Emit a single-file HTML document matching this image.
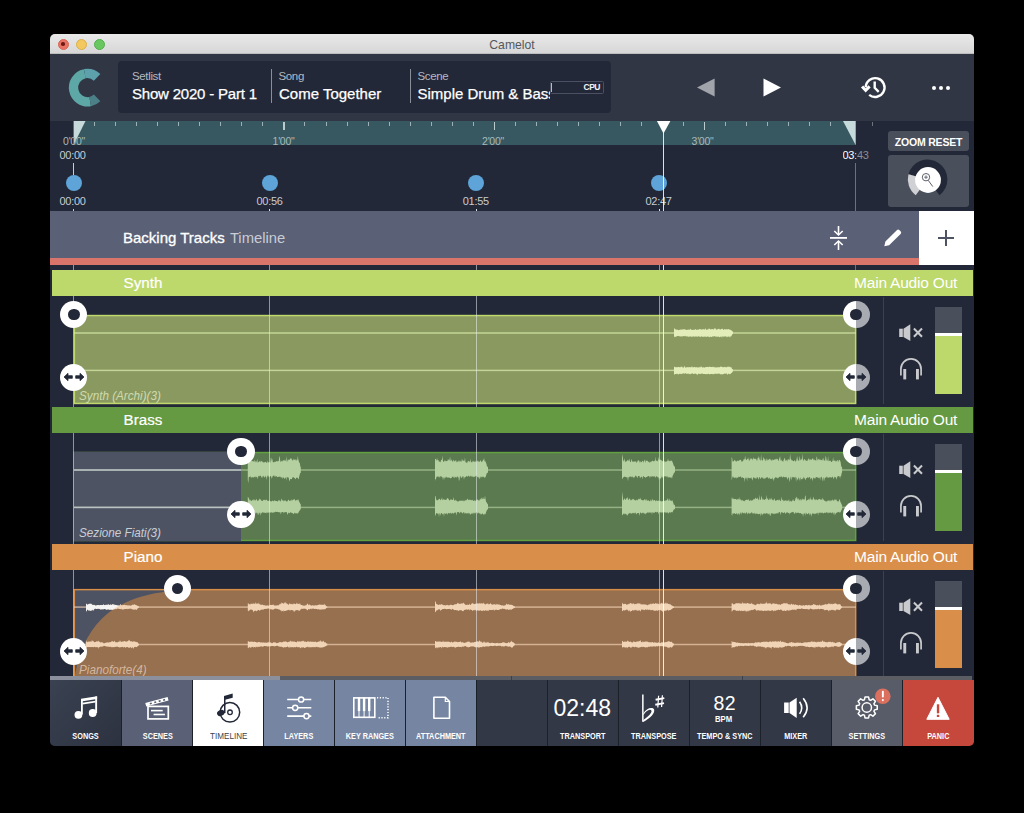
<!DOCTYPE html>
<html><head><meta charset="utf-8">
<style>
*{margin:0;padding:0;box-sizing:border-box}
html,body{width:1024px;height:813px;background:#000;overflow:hidden;font-family:"Liberation Sans",sans-serif}
div,span,svg{position:absolute}
.t{white-space:nowrap;line-height:1}
.tl{width:11px;height:11px;border-radius:50%;top:38.5px}
.lbl{font-size:11.5px;color:#b5b9c2;letter-spacing:-0.35px}
.val{font-size:15px;color:#fff;-webkit-text-stroke:0.25px #fff}
.tick{width:1px;background:rgba(255,255,255,0.75);top:122px;height:4px}
.rl{font-size:10.5px;color:#a9b8b9;top:136px;letter-spacing:-0.3px}
.tm{font-size:11px;color:#c9ccd3;letter-spacing:-0.3px}
.mk{width:16px;height:16px;border-radius:50%;background:#5ea4d8;top:175px}
.mt{width:1px;background:#c9ccd3;top:209px;height:2px}
</style></head><body>
<!-- window -->
<div style="left:50px;top:34px;width:924px;height:712px;background:#222837;border-radius:5px"></div>
<div style="left:50px;top:34px;width:924px;height:20px;background:linear-gradient(#e9e9e9,#d7d7d7);border-radius:5px 5px 0 0;border-bottom:1px solid #bdbdbd"></div>
<div class="t" style="left:50px;width:924px;top:39px;text-align:center;font-size:12.2px;color:#55575c">Camelot</div>
<div class="tl" style="left:57.7px;background:#ea7263;border:0.5px solid #d3675a"></div>
<div style="left:61.4px;top:42.2px;width:3.6px;height:3.6px;border-radius:50%;background:#6b1a14"></div>
<div class="tl" style="left:75.8px;background:#f3c85f;border:0.5px solid #dcae4c"></div>
<div class="tl" style="left:93.9px;background:#69c760;border:0.5px solid #56ae4c"></div>

<!-- header -->
<div style="left:50px;top:54px;width:924px;height:67px;background:#303644"></div>
<svg style="left:66px;top:66px" width="44" height="44" viewBox="0 0 44 44">
  <g transform="translate(21.2,21.7)" fill="none" stroke-width="9.3">
    <path d="M 9.90 -10.25 A 14.25 14.25 0 0 0 -2.47 -14.03" stroke="#5ca1ab"/>
    <path d="M -2.47 -14.03 A 14.25 14.25 0 0 0 2.96 13.94" stroke="#5ea7a7"/>
    <path d="M 2.96 13.94 A 14.25 14.25 0 0 0 9.90 10.25" stroke="#4b8088"/>
  </g>
</svg>
<div style="left:117.6px;top:61.4px;width:493px;height:51.6px;background:#222838;border-radius:4px"></div>
<div class="t lbl" style="left:132px;top:71px">Setlist</div>
<div class="t val" style="left:132px;top:85.5px;letter-spacing:-0.2px">Show 2020 - Part 1</div>
<div style="left:271.3px;top:68.6px;width:1px;height:34px;background:#8a8e98"></div>
<div class="t lbl" style="left:278.5px;top:71px">Song</div>
<div class="t val" style="left:279px;top:85.5px">Come Together</div>
<div style="left:410.1px;top:68.6px;width:1px;height:34px;background:#8a8e98"></div>
<div class="t lbl" style="left:417.5px;top:71px">Scene</div>
<div style="left:417px;top:80px;width:133.4px;height:24px;overflow:hidden"><div class="t val" style="left:0.5px;top:5.5px">Simple Drum &amp; Bass</div></div>
<div style="left:550.4px;top:81.2px;width:53.2px;height:12.5px;border:1px solid #4b5162;border-radius:1.5px"></div>
<div style="left:551.3px;top:82.6px;width:1px;height:9.6px;background:#b8bbc2"></div>
<div class="t" style="left:583.5px;top:83px;font-size:8.5px;font-weight:bold;color:#f2f2f2;letter-spacing:-0.5px">CPU</div>
<!-- transport icons -->
<svg style="left:690px;top:70px" width="100" height="36" viewBox="0 0 100 36">
  <path d="M 24.6 8.5 L 24.6 26.6 L 7 17.5 Z" fill="#a1a4ab"/>
  <path d="M 73.5 8.5 L 73.5 26.6 L 91 17.5 Z" fill="#fff"/>
</svg>
<svg style="left:855px;top:72px" width="40" height="32" viewBox="0 0 40 32">
  <path d="M10.74,15.2 A9.4,9.4 0 1 1 14.18,22.81" fill="none" stroke="#fff" stroke-width="2.4"/>
  <path d="M7.1,14.4 L10.7,18.4 L14.6,14.4" fill="none" stroke="#fff" stroke-width="3"/>
  <path d="M19.7,9.6 L19.7,15.8 L23.7,19.8" fill="none" stroke="#fff" stroke-width="2.4"/>
</svg>
<div style="left:931.5px;top:85.8px;width:4px;height:4px;border-radius:50%;background:#fff"></div>
<div style="left:938.5px;top:85.8px;width:4px;height:4px;border-radius:50%;background:#fff"></div>
<div style="left:945.5px;top:85.8px;width:4px;height:4px;border-radius:50%;background:#fff"></div>

<!-- ruler -->
<div style="left:73.6px;top:121px;width:782px;height:24px;background:#375860"></div>
<div style="left:94.1px;top:122px;width:1px;height:3.8px;background:rgba(225,235,240,0.6)"></div>
<div style="left:115.2px;top:122px;width:1px;height:3.8px;background:rgba(225,235,240,0.6)"></div>
<div style="left:136.2px;top:122px;width:1px;height:3.8px;background:rgba(225,235,240,0.6)"></div>
<div style="left:157.2px;top:122px;width:1px;height:3.8px;background:rgba(225,235,240,0.6)"></div>
<div style="left:178.2px;top:122px;width:1px;height:3.8px;background:rgba(225,235,240,0.6)"></div>
<div style="left:199.3px;top:122px;width:1px;height:3.8px;background:rgba(225,235,240,0.6)"></div>
<div style="left:220.3px;top:122px;width:1px;height:3.8px;background:rgba(225,235,240,0.6)"></div>
<div style="left:241.3px;top:122px;width:1px;height:3.8px;background:rgba(225,235,240,0.6)"></div>
<div style="left:262.4px;top:122px;width:1px;height:3.8px;background:rgba(225,235,240,0.6)"></div>
<div style="left:283.4px;top:122px;width:1.2px;height:7.5px;background:rgba(235,240,242,0.75)"></div>
<div style="left:304.4px;top:122px;width:1px;height:3.8px;background:rgba(225,235,240,0.6)"></div>
<div style="left:325.5px;top:122px;width:1px;height:3.8px;background:rgba(225,235,240,0.6)"></div>
<div style="left:346.5px;top:122px;width:1px;height:3.8px;background:rgba(225,235,240,0.6)"></div>
<div style="left:367.5px;top:122px;width:1px;height:3.8px;background:rgba(225,235,240,0.6)"></div>
<div style="left:388.6px;top:122px;width:1px;height:3.8px;background:rgba(225,235,240,0.6)"></div>
<div style="left:409.6px;top:122px;width:1px;height:3.8px;background:rgba(225,235,240,0.6)"></div>
<div style="left:430.6px;top:122px;width:1px;height:3.8px;background:rgba(225,235,240,0.6)"></div>
<div style="left:451.6px;top:122px;width:1px;height:3.8px;background:rgba(225,235,240,0.6)"></div>
<div style="left:472.7px;top:122px;width:1px;height:3.8px;background:rgba(225,235,240,0.6)"></div>
<div style="left:493.7px;top:122px;width:1.2px;height:7.5px;background:rgba(235,240,242,0.75)"></div>
<div style="left:514.7px;top:122px;width:1px;height:3.8px;background:rgba(225,235,240,0.6)"></div>
<div style="left:535.8px;top:122px;width:1px;height:3.8px;background:rgba(225,235,240,0.6)"></div>
<div style="left:556.8px;top:122px;width:1px;height:3.8px;background:rgba(225,235,240,0.6)"></div>
<div style="left:577.8px;top:122px;width:1px;height:3.8px;background:rgba(225,235,240,0.6)"></div>
<div style="left:598.9px;top:122px;width:1px;height:3.8px;background:rgba(225,235,240,0.6)"></div>
<div style="left:619.9px;top:122px;width:1px;height:3.8px;background:rgba(225,235,240,0.6)"></div>
<div style="left:640.9px;top:122px;width:1px;height:3.8px;background:rgba(225,235,240,0.6)"></div>
<div style="left:661.9px;top:122px;width:1px;height:3.8px;background:rgba(225,235,240,0.6)"></div>
<div style="left:683.0px;top:122px;width:1px;height:3.8px;background:rgba(225,235,240,0.6)"></div>
<div style="left:704.0px;top:122px;width:1.2px;height:7.5px;background:rgba(235,240,242,0.75)"></div>
<div style="left:725.0px;top:122px;width:1px;height:3.8px;background:rgba(225,235,240,0.6)"></div>
<div style="left:746.1px;top:122px;width:1px;height:3.8px;background:rgba(225,235,240,0.6)"></div>
<div style="left:767.1px;top:122px;width:1px;height:3.8px;background:rgba(225,235,240,0.6)"></div>
<div style="left:788.1px;top:122px;width:1px;height:3.8px;background:rgba(225,235,240,0.6)"></div>
<div style="left:809.2px;top:122px;width:1px;height:3.8px;background:rgba(225,235,240,0.6)"></div>
<div style="left:830.2px;top:122px;width:1px;height:3.8px;background:rgba(225,235,240,0.6)"></div>
<div style="left:872.2px;top:122px;width:1px;height:3.8px;background:rgba(255,255,255,0.35)"></div>
<svg style="left:0;top:0" width="1024" height="150">
  <polygon points="73.6,121 85.5,121 73.6,145" fill="#c6dadb"/>
  <polygon points="843,121 855.6,121 855.6,145" fill="#c6dadb"/>
</svg>
<div class="t rl" style="left:49px;width:50px;text-align:center">0'00"</div>
<div class="t rl" style="left:258.5px;width:50px;text-align:center">1'00"</div>
<div class="t rl" style="left:468px;width:50px;text-align:center">2'00"</div>
<div class="t rl" style="left:677.5px;width:50px;text-align:center">3'00"</div>
<div class="t tm" style="left:59.5px;top:150px">00:00</div>
<div style="left:842.5px;top:150px;width:13.3px;height:12px;overflow:hidden"><div class="t tm" style="left:0;top:0;color:#fff">03:43</div></div>
<div style="left:855.8px;top:150px;width:14px;height:12px;overflow:hidden"><div class="t tm" style="left:-13.3px;top:0;color:#8a8e98">03:43</div></div>
<div style="left:73.1px;top:163px;width:1.2px;height:12px;background:#c9ccd3"></div>
<div style="left:855.2px;top:163px;width:1.2px;height:102px;background:#6d717c"></div>
<div class="mk" style="left:65.6px"></div>
<div class="mk" style="left:261.8px"></div>
<div class="mk" style="left:468.4px"></div>
<div class="mk" style="left:651px"></div>
<div class="t tm" style="left:59.5px;top:196px">00:00</div>
<div class="t tm" style="left:256.5px;top:196px">00:56</div>
<div class="t tm" style="left:462.8px;top:196px">01:55</div>
<div class="t tm" style="left:645.5px;top:196px">02:47</div>
<div class="mt" style="left:73.1px"></div>
<div class="mt" style="left:269.3px"></div>
<div class="mt" style="left:475.9px"></div>
<div class="mt" style="left:658.5px"></div>

<!-- zoom reset -->
<div style="left:888px;top:131px;width:81px;height:19.6px;background:#4a4f5c;border-radius:3px"></div>
<div class="t" style="left:888px;width:81px;text-align:center;top:136.5px;font-size:10.5px;font-weight:bold;color:#fff;letter-spacing:-0.2px">ZOOM RESET</div>
<div style="left:888px;top:154.5px;width:81px;height:52px;background:#4a4f5c;border-radius:3px"></div>

<svg style="left:0;top:0" width="1024" height="813" viewBox="0 0 1024 813">
<defs><clipPath id="fade"><path d="M74.5,676 C84,625 112,595 178,590 L74.5,590 Z"/></clipPath></defs>
<rect x="74.35" y="315.55" width="781.3" height="87.90" fill="#8a9960" stroke="#c0d96d" stroke-width="1.5"/>
<rect x="74" y="332.25" width="782" height="1.5" fill="rgba(215,232,170,0.75)"/>
<rect x="74" y="369.65" width="782" height="1.5" fill="rgba(215,232,170,0.75)"/>
<path d="M674.0,328.3 L674.5,328.3 L675.0,329.5 L675.5,329.2 L676.0,329.4 L676.5,329.8 L677.0,329.4 L677.5,329.7 L678.0,330.0 L678.5,330.2 L679.0,329.9 L679.5,330.1 L680.0,329.6 L680.5,329.6 L681.0,330.0 L681.5,329.6 L682.0,329.3 L682.5,329.5 L683.0,329.6 L683.5,329.3 L684.0,329.2 L684.5,329.3 L685.0,329.5 L685.5,329.5 L686.0,329.8 L686.5,329.9 L687.0,329.9 L687.5,329.4 L688.0,330.0 L688.5,329.2 L689.0,329.9 L689.5,329.4 L690.0,329.5 L690.5,328.4 L691.0,329.8 L691.5,329.8 L692.0,329.7 L692.5,329.9 L693.0,329.7 L693.5,330.0 L694.0,329.6 L694.5,329.7 L695.0,329.8 L695.5,328.9 L696.0,329.3 L696.5,330.0 L697.0,329.9 L697.5,329.6 L698.0,329.4 L698.5,330.1 L699.0,329.1 L699.5,329.3 L700.0,329.0 L700.5,329.2 L701.0,329.5 L701.5,329.6 L702.0,329.5 L702.5,329.4 L703.0,329.1 L703.5,328.9 L704.0,329.8 L704.5,329.3 L705.0,329.4 L705.5,327.9 L706.0,329.4 L706.5,329.9 L707.0,329.6 L707.5,329.7 L708.0,328.9 L708.5,329.6 L709.0,327.9 L709.5,328.9 L710.0,329.1 L710.5,329.5 L711.0,329.3 L711.5,329.0 L712.0,329.6 L712.5,329.0 L713.0,329.1 L713.5,329.8 L714.0,329.1 L714.5,327.9 L715.0,329.1 L715.5,328.1 L716.0,329.4 L716.5,329.7 L717.0,329.6 L717.5,329.3 L718.0,328.9 L718.5,329.1 L719.0,328.6 L719.5,328.9 L720.0,329.8 L720.5,329.4 L721.0,328.9 L721.5,329.1 L722.0,329.0 L722.5,328.6 L723.0,329.2 L723.5,329.9 L724.0,329.7 L724.5,329.0 L725.0,328.9 L725.5,329.4 L726.0,329.6 L726.5,329.2 L727.0,329.1 L727.5,329.6 L728.0,329.3 L728.5,329.1 L729.0,329.2 L729.5,329.8 L730.0,329.4 L730.5,330.0 L731.0,329.9 L731.5,330.5 L732.0,330.8 L732.5,331.8 L733.0,331.0 L733.0,334.3 L732.5,334.1 L732.0,334.7 L731.5,336.0 L731.0,336.6 L730.5,336.3 L730.0,337.8 L729.5,336.5 L729.0,336.5 L728.5,336.8 L728.0,336.3 L727.5,337.4 L727.0,336.2 L726.5,337.2 L726.0,336.3 L725.5,336.2 L725.0,336.8 L724.5,336.4 L724.0,336.2 L723.5,337.1 L723.0,336.1 L722.5,336.4 L722.0,337.9 L721.5,336.2 L721.0,337.1 L720.5,336.4 L720.0,336.9 L719.5,337.2 L719.0,337.0 L718.5,336.3 L718.0,337.0 L717.5,336.8 L717.0,336.6 L716.5,336.7 L716.0,336.6 L715.5,336.5 L715.0,336.8 L714.5,336.1 L714.0,336.1 L713.5,337.0 L713.0,336.1 L712.5,336.6 L712.0,336.7 L711.5,337.0 L711.0,337.1 L710.5,336.3 L710.0,337.8 L709.5,336.8 L709.0,337.0 L708.5,336.8 L708.0,336.5 L707.5,336.6 L707.0,336.6 L706.5,337.1 L706.0,336.9 L705.5,336.5 L705.0,336.5 L704.5,336.6 L704.0,336.9 L703.5,336.8 L703.0,336.6 L702.5,337.0 L702.0,336.4 L701.5,336.2 L701.0,336.6 L700.5,337.3 L700.0,336.6 L699.5,336.9 L699.0,336.0 L698.5,336.5 L698.0,336.3 L697.5,336.8 L697.0,336.9 L696.5,336.6 L696.0,336.0 L695.5,336.5 L695.0,337.1 L694.5,336.4 L694.0,336.5 L693.5,336.4 L693.0,336.3 L692.5,336.5 L692.0,337.2 L691.5,336.8 L691.0,336.2 L690.5,336.6 L690.0,336.5 L689.5,336.4 L689.0,336.7 L688.5,336.8 L688.0,336.8 L687.5,336.3 L687.0,336.5 L686.5,336.1 L686.0,336.9 L685.5,335.8 L685.0,335.9 L684.5,336.2 L684.0,336.2 L683.5,336.0 L683.0,336.3 L682.5,336.5 L682.0,336.3 L681.5,336.5 L681.0,336.4 L680.5,336.2 L680.0,336.8 L679.5,336.3 L679.0,335.8 L678.5,336.1 L678.0,336.3 L677.5,336.0 L677.0,336.0 L676.5,336.4 L676.0,336.7 L675.5,336.9 L675.0,336.2 L674.5,337.1 L674.0,337.3Z" fill="#e2edba"/><path d="M674.0,366.7 L674.5,366.8 L675.0,367.1 L675.5,367.4 L676.0,366.7 L676.5,367.2 L677.0,367.4 L677.5,367.3 L678.0,366.8 L678.5,367.0 L679.0,367.0 L679.5,367.6 L680.0,366.7 L680.5,367.4 L681.0,366.3 L681.5,367.2 L682.0,366.3 L682.5,367.4 L683.0,367.5 L683.5,367.7 L684.0,366.9 L684.5,365.6 L685.0,367.5 L685.5,367.4 L686.0,367.6 L686.5,367.3 L687.0,367.3 L687.5,366.9 L688.0,367.6 L688.5,367.3 L689.0,366.9 L689.5,367.0 L690.0,367.4 L690.5,366.9 L691.0,367.5 L691.5,367.0 L692.0,366.1 L692.5,367.2 L693.0,367.6 L693.5,367.2 L694.0,367.0 L694.5,367.0 L695.0,367.1 L695.5,367.3 L696.0,367.7 L696.5,367.0 L697.0,367.1 L697.5,367.6 L698.0,367.8 L698.5,367.2 L699.0,367.3 L699.5,366.9 L700.0,367.4 L700.5,367.3 L701.0,365.7 L701.5,367.3 L702.0,366.8 L702.5,367.7 L703.0,367.6 L703.5,367.0 L704.0,367.7 L704.5,367.5 L705.0,367.4 L705.5,367.1 L706.0,366.9 L706.5,366.9 L707.0,367.3 L707.5,366.8 L708.0,367.1 L708.5,367.2 L709.0,366.8 L709.5,366.8 L710.0,366.8 L710.5,366.9 L711.0,366.9 L711.5,367.1 L712.0,367.3 L712.5,366.6 L713.0,367.2 L713.5,367.3 L714.0,366.6 L714.5,367.2 L715.0,367.4 L715.5,367.2 L716.0,367.4 L716.5,367.5 L717.0,367.3 L717.5,367.3 L718.0,367.2 L718.5,367.3 L719.0,366.9 L719.5,367.6 L720.0,366.7 L720.5,366.5 L721.0,367.1 L721.5,366.6 L722.0,366.9 L722.5,367.3 L723.0,366.8 L723.5,367.3 L724.0,367.5 L724.5,366.7 L725.0,367.1 L725.5,366.8 L726.0,367.7 L726.5,367.2 L727.0,366.8 L727.5,366.7 L728.0,367.0 L728.5,367.1 L729.0,366.1 L729.5,367.2 L730.0,366.9 L730.5,367.4 L731.0,366.5 L731.5,367.7 L732.0,368.8 L732.5,369.4 L733.0,369.2 L733.0,371.7 L732.5,371.6 L732.0,372.7 L731.5,372.9 L731.0,373.3 L730.5,374.3 L730.0,373.7 L729.5,374.3 L729.0,374.3 L728.5,373.5 L728.0,373.7 L727.5,375.3 L727.0,373.7 L726.5,373.4 L726.0,373.4 L725.5,373.8 L725.0,373.6 L724.5,373.5 L724.0,374.1 L723.5,374.1 L723.0,374.3 L722.5,374.3 L722.0,374.5 L721.5,374.0 L721.0,374.5 L720.5,374.3 L720.0,374.1 L719.5,373.4 L719.0,373.9 L718.5,373.6 L718.0,373.4 L717.5,373.8 L717.0,374.2 L716.5,373.5 L716.0,373.9 L715.5,373.7 L715.0,373.4 L714.5,373.8 L714.0,374.3 L713.5,374.1 L713.0,374.6 L712.5,374.1 L712.0,373.8 L711.5,373.9 L711.0,374.0 L710.5,374.1 L710.0,374.2 L709.5,374.2 L709.0,374.3 L708.5,373.6 L708.0,373.9 L707.5,374.3 L707.0,374.0 L706.5,374.2 L706.0,374.0 L705.5,374.2 L705.0,374.0 L704.5,374.1 L704.0,374.1 L703.5,374.1 L703.0,374.1 L702.5,373.6 L702.0,373.6 L701.5,373.5 L701.0,374.2 L700.5,373.9 L700.0,373.6 L699.5,373.9 L699.0,374.0 L698.5,373.6 L698.0,373.9 L697.5,375.4 L697.0,373.5 L696.5,374.4 L696.0,374.1 L695.5,373.6 L695.0,373.4 L694.5,373.7 L694.0,373.9 L693.5,374.1 L693.0,373.7 L692.5,373.2 L692.0,373.6 L691.5,373.8 L691.0,373.4 L690.5,374.5 L690.0,373.7 L689.5,374.0 L689.0,374.4 L688.5,373.3 L688.0,373.9 L687.5,373.8 L687.0,373.5 L686.5,374.1 L686.0,373.4 L685.5,373.3 L685.0,373.3 L684.5,374.0 L684.0,373.2 L683.5,373.2 L683.0,373.7 L682.5,373.6 L682.0,374.1 L681.5,373.8 L681.0,374.3 L680.5,373.6 L680.0,374.3 L679.5,373.4 L679.0,373.9 L678.5,374.4 L678.0,374.3 L677.5,373.6 L677.0,374.4 L676.5,373.6 L676.0,374.1 L675.5,373.9 L675.0,374.1 L674.5,374.5 L674.0,374.7Z" fill="#e2edba"/>
<rect x="74.35" y="452.55" width="781.3" height="87.90" fill="#5b7a4f" stroke="#62a040" stroke-width="1.5"/>
<rect x="73.6" y="451.80" width="167.40" height="89.40" fill="#4e5363"/>
<rect x="74" y="469.25" width="782" height="1.5" fill="rgba(190,215,170,0.6)"/>
<rect x="74" y="506.65" width="782" height="1.5" fill="rgba(190,215,170,0.6)"/>
<rect x="74" y="469.25" width="167" height="1.5" fill="rgba(200,205,215,0.75)"/>
<rect x="74" y="506.65" width="167" height="1.5" fill="rgba(200,205,215,0.75)"/>
<path d="M247.8,458.4 L248.3,453.2 L248.8,461.1 L249.3,461.7 L249.8,459.9 L250.3,458.3 L250.8,462.1 L251.3,461.0 L251.8,460.7 L252.3,460.9 L252.8,461.3 L253.3,461.8 L253.8,460.9 L254.3,459.8 L254.8,462.3 L255.3,460.6 L255.8,462.4 L256.3,461.9 L256.8,461.1 L257.3,458.8 L257.8,462.9 L258.3,462.0 L258.8,461.9 L259.3,461.1 L259.8,461.6 L260.3,462.6 L260.8,460.6 L261.3,461.1 L261.8,461.4 L262.3,461.4 L262.8,461.9 L263.3,462.9 L263.8,461.7 L264.3,462.5 L264.8,462.2 L265.3,461.7 L265.8,461.9 L266.3,462.8 L266.8,462.7 L267.3,460.5 L267.8,462.8 L268.3,461.6 L268.8,463.1 L269.3,462.0 L269.8,461.9 L270.3,462.7 L270.8,457.9 L271.3,457.8 L271.8,461.3 L272.3,458.5 L272.8,462.1 L273.3,462.6 L273.8,462.3 L274.3,461.6 L274.8,462.2 L275.3,461.3 L275.8,462.2 L276.3,461.3 L276.8,460.9 L277.3,461.7 L277.8,460.8 L278.3,461.2 L278.8,460.9 L279.3,456.0 L279.8,457.2 L280.3,461.2 L280.8,462.1 L281.3,461.2 L281.8,460.7 L282.3,461.8 L282.8,460.3 L283.3,460.2 L283.8,460.6 L284.3,460.9 L284.8,459.6 L285.3,460.8 L285.8,460.4 L286.3,456.3 L286.8,461.8 L287.3,461.4 L287.8,459.2 L288.3,460.5 L288.8,459.3 L289.3,459.6 L289.8,459.9 L290.3,458.6 L290.8,458.3 L291.3,458.3 L291.8,459.5 L292.3,460.3 L292.8,460.4 L293.3,460.3 L293.8,458.5 L294.3,459.7 L294.8,459.7 L295.3,459.1 L295.8,460.5 L296.3,460.7 L296.8,459.3 L297.3,460.3 L297.8,455.8 L298.3,459.6 L298.8,461.3 L299.3,462.8 L299.8,463.1 L300.3,466.5 L300.8,467.0 L300.8,473.1 L300.3,472.8 L299.8,474.5 L299.3,475.9 L298.8,478.5 L298.3,479.4 L297.8,478.0 L297.3,477.4 L296.8,478.1 L296.3,477.3 L295.8,479.1 L295.3,479.3 L294.8,477.9 L294.3,478.0 L293.8,477.3 L293.3,477.2 L292.8,477.6 L292.3,477.4 L291.8,479.2 L291.3,479.0 L290.8,479.0 L290.3,479.1 L289.8,480.3 L289.3,481.4 L288.8,478.3 L288.3,477.2 L287.8,477.1 L287.3,477.8 L286.8,476.6 L286.3,480.7 L285.8,477.5 L285.3,477.7 L284.8,478.7 L284.3,478.6 L283.8,478.1 L283.3,476.8 L282.8,479.3 L282.3,477.2 L281.8,477.8 L281.3,477.2 L280.8,477.6 L280.3,476.5 L279.8,477.1 L279.3,476.5 L278.8,476.8 L278.3,476.7 L277.8,477.3 L277.3,477.0 L276.8,476.4 L276.3,476.0 L275.8,477.2 L275.3,475.4 L274.8,476.9 L274.3,475.5 L273.8,475.6 L273.3,475.7 L272.8,476.1 L272.3,476.9 L271.8,479.1 L271.3,477.0 L270.8,476.0 L270.3,476.1 L269.8,477.2 L269.3,477.1 L268.8,477.0 L268.3,475.5 L267.8,475.6 L267.3,476.2 L266.8,480.2 L266.3,477.1 L265.8,477.1 L265.3,475.6 L264.8,478.0 L264.3,476.9 L263.8,475.6 L263.3,476.9 L262.8,475.7 L262.3,477.7 L261.8,477.7 L261.3,476.9 L260.8,475.4 L260.3,475.9 L259.8,475.7 L259.3,476.4 L258.8,475.8 L258.3,476.2 L257.8,479.3 L257.3,477.2 L256.8,476.6 L256.3,477.4 L255.8,476.2 L255.3,477.6 L254.8,477.2 L254.3,476.5 L253.8,477.1 L253.3,477.7 L252.8,477.4 L252.3,477.0 L251.8,477.5 L251.3,477.6 L250.8,477.5 L250.3,476.0 L249.8,477.1 L249.3,476.8 L248.8,476.9 L248.3,483.3 L247.8,480.0Z" fill="#b4d0a0"/><path d="M247.8,496.2 L248.3,498.8 L248.8,496.7 L249.3,499.5 L249.8,500.7 L250.3,499.5 L250.8,500.7 L251.3,500.8 L251.8,501.0 L252.3,500.3 L252.8,499.8 L253.3,499.0 L253.8,500.7 L254.3,500.3 L254.8,499.3 L255.3,501.1 L255.8,499.7 L256.3,499.0 L256.8,499.6 L257.3,500.7 L257.8,501.0 L258.3,500.5 L258.8,500.3 L259.3,498.2 L259.8,499.7 L260.3,499.2 L260.8,499.6 L261.3,500.6 L261.8,500.9 L262.3,500.7 L262.8,500.9 L263.3,499.6 L263.8,500.2 L264.3,499.9 L264.8,499.7 L265.3,499.7 L265.8,500.8 L266.3,499.4 L266.8,499.7 L267.3,500.7 L267.8,500.7 L268.3,501.0 L268.8,500.8 L269.3,500.5 L269.8,500.5 L270.3,501.3 L270.8,501.3 L271.3,501.6 L271.8,501.3 L272.3,500.5 L272.8,500.8 L273.3,501.1 L273.8,501.5 L274.3,500.3 L274.8,500.4 L275.3,500.7 L275.8,501.0 L276.3,501.0 L276.8,501.1 L277.3,501.4 L277.8,501.6 L278.3,500.3 L278.8,500.2 L279.3,501.3 L279.8,499.6 L280.3,501.1 L280.8,501.7 L281.3,499.7 L281.8,498.3 L282.3,500.7 L282.8,500.1 L283.3,501.8 L283.8,499.9 L284.3,500.7 L284.8,500.6 L285.3,500.7 L285.8,500.2 L286.3,501.5 L286.8,501.4 L287.3,501.5 L287.8,500.5 L288.3,499.7 L288.8,499.8 L289.3,500.8 L289.8,500.9 L290.3,501.3 L290.8,499.7 L291.3,500.9 L291.8,499.1 L292.3,500.7 L292.8,499.7 L293.3,499.5 L293.8,499.7 L294.3,498.6 L294.8,500.0 L295.3,500.2 L295.8,501.0 L296.3,499.8 L296.8,500.3 L297.3,500.5 L297.8,499.3 L298.3,499.6 L298.8,500.7 L299.3,502.2 L299.8,502.4 L300.3,503.9 L300.8,504.4 L300.8,509.3 L300.3,509.5 L299.8,510.6 L299.3,511.1 L298.8,512.1 L298.3,513.0 L297.8,512.7 L297.3,513.9 L296.8,513.5 L296.3,513.0 L295.8,513.7 L295.3,513.0 L294.8,512.4 L294.3,513.3 L293.8,513.7 L293.3,514.3 L292.8,512.8 L292.3,513.6 L291.8,512.5 L291.3,513.1 L290.8,512.6 L290.3,512.1 L289.8,513.6 L289.3,513.0 L288.8,512.4 L288.3,513.1 L287.8,513.8 L287.3,515.1 L286.8,512.2 L286.3,512.1 L285.8,512.0 L285.3,512.3 L284.8,512.0 L284.3,512.6 L283.8,513.6 L283.3,511.7 L282.8,511.9 L282.3,511.9 L281.8,512.0 L281.3,512.7 L280.8,514.4 L280.3,511.9 L279.8,512.5 L279.3,512.1 L278.8,512.5 L278.3,512.0 L277.8,512.1 L277.3,511.8 L276.8,512.1 L276.3,511.9 L275.8,511.6 L275.3,511.9 L274.8,512.2 L274.3,512.2 L273.8,511.9 L273.3,512.9 L272.8,512.8 L272.3,512.6 L271.8,512.5 L271.3,512.3 L270.8,512.7 L270.3,512.5 L269.8,511.8 L269.3,512.8 L268.8,512.7 L268.3,512.6 L267.8,512.4 L267.3,513.1 L266.8,512.1 L266.3,513.5 L265.8,513.1 L265.3,512.7 L264.8,512.9 L264.3,512.6 L263.8,512.8 L263.3,512.5 L262.8,512.3 L262.3,512.3 L261.8,513.4 L261.3,513.0 L260.8,512.4 L260.3,515.7 L259.8,513.6 L259.3,512.6 L258.8,512.8 L258.3,515.2 L257.8,514.5 L257.3,512.8 L256.8,512.4 L256.3,512.9 L255.8,513.9 L255.3,512.7 L254.8,512.2 L254.3,512.8 L253.8,512.6 L253.3,513.7 L252.8,513.9 L252.3,512.5 L251.8,512.7 L251.3,512.8 L250.8,513.9 L250.3,513.1 L249.8,513.8 L249.3,514.2 L248.8,513.7 L248.3,515.3 L247.8,514.3Z" fill="#b4d0a0"/>
<path d="M435.0,458.9 L435.5,458.7 L436.0,459.4 L436.5,460.9 L437.0,457.6 L437.5,459.9 L438.0,460.5 L438.5,459.7 L439.0,462.2 L439.5,461.6 L440.0,461.5 L440.5,462.4 L441.0,460.2 L441.5,460.0 L442.0,459.6 L442.5,455.6 L443.0,461.7 L443.5,461.4 L444.0,461.9 L444.5,460.6 L445.0,460.2 L445.5,460.9 L446.0,461.4 L446.5,461.1 L447.0,461.0 L447.5,461.1 L448.0,458.8 L448.5,460.6 L449.0,459.3 L449.5,460.7 L450.0,456.3 L450.5,460.1 L451.0,461.4 L451.5,459.2 L452.0,460.3 L452.5,462.2 L453.0,460.6 L453.5,459.6 L454.0,462.1 L454.5,460.4 L455.0,461.6 L455.5,460.6 L456.0,459.8 L456.5,461.8 L457.0,462.4 L457.5,460.7 L458.0,462.5 L458.5,460.8 L459.0,460.6 L459.5,460.8 L460.0,462.6 L460.5,460.2 L461.0,461.7 L461.5,461.5 L462.0,458.2 L462.5,460.8 L463.0,460.5 L463.5,460.5 L464.0,461.2 L464.5,460.8 L465.0,457.3 L465.5,462.4 L466.0,461.9 L466.5,462.8 L467.0,462.9 L467.5,462.2 L468.0,460.6 L468.5,461.2 L469.0,461.2 L469.5,461.2 L470.0,462.6 L470.5,458.5 L471.0,462.1 L471.5,462.0 L472.0,462.8 L472.5,461.5 L473.0,460.5 L473.5,462.1 L474.0,461.0 L474.5,461.8 L475.0,461.9 L475.5,461.5 L476.0,460.6 L476.5,462.5 L477.0,461.5 L477.5,460.3 L478.0,462.0 L478.5,460.7 L479.0,461.9 L479.5,462.0 L480.0,460.7 L480.5,460.2 L481.0,460.9 L481.5,462.2 L482.0,461.6 L482.5,461.4 L483.0,459.8 L483.5,460.3 L484.0,457.8 L484.5,460.4 L485.0,462.3 L485.5,460.7 L486.0,463.0 L486.5,464.1 L487.0,466.8 L487.5,466.6 L488.0,467.0 L488.0,472.1 L487.5,473.2 L487.0,472.8 L486.5,474.0 L486.0,475.7 L485.5,477.7 L485.0,476.6 L484.5,477.9 L484.0,477.4 L483.5,476.7 L483.0,476.4 L482.5,477.6 L482.0,476.1 L481.5,477.7 L481.0,476.5 L480.5,476.8 L480.0,478.7 L479.5,479.1 L479.0,476.6 L478.5,478.0 L478.0,476.9 L477.5,477.2 L477.0,476.2 L476.5,475.8 L476.0,475.6 L475.5,476.4 L475.0,476.5 L474.5,476.9 L474.0,476.6 L473.5,476.9 L473.0,477.3 L472.5,476.7 L472.0,475.5 L471.5,476.8 L471.0,476.6 L470.5,475.5 L470.0,477.0 L469.5,476.6 L469.0,475.9 L468.5,475.6 L468.0,476.5 L467.5,476.8 L467.0,476.2 L466.5,475.7 L466.0,477.0 L465.5,476.8 L465.0,477.5 L464.5,476.9 L464.0,479.7 L463.5,476.8 L463.0,476.1 L462.5,476.4 L462.0,477.8 L461.5,477.4 L461.0,477.9 L460.5,476.2 L460.0,475.7 L459.5,479.6 L459.0,481.2 L458.5,477.3 L458.0,477.6 L457.5,476.2 L457.0,476.5 L456.5,477.6 L456.0,477.7 L455.5,476.7 L455.0,477.1 L454.5,478.4 L454.0,476.1 L453.5,478.1 L453.0,476.8 L452.5,476.5 L452.0,477.3 L451.5,478.0 L451.0,478.0 L450.5,478.4 L450.0,478.0 L449.5,477.4 L449.0,477.7 L448.5,477.8 L448.0,476.9 L447.5,477.8 L447.0,477.7 L446.5,477.1 L446.0,476.4 L445.5,478.0 L445.0,477.4 L444.5,477.6 L444.0,480.3 L443.5,476.5 L443.0,480.1 L442.5,477.2 L442.0,477.2 L441.5,476.4 L441.0,476.2 L440.5,475.9 L440.0,477.8 L439.5,477.2 L439.0,475.9 L438.5,477.4 L438.0,476.1 L437.5,476.9 L437.0,476.6 L436.5,476.8 L436.0,478.9 L435.5,478.9 L435.0,480.9Z" fill="#b4d0a0"/><path d="M435.0,496.5 L435.5,495.8 L436.0,498.8 L436.5,500.3 L437.0,499.9 L437.5,500.3 L438.0,500.6 L438.5,499.4 L439.0,498.5 L439.5,499.1 L440.0,498.9 L440.5,500.4 L441.0,499.7 L441.5,498.9 L442.0,497.3 L442.5,500.0 L443.0,500.2 L443.5,499.3 L444.0,498.8 L444.5,500.0 L445.0,499.8 L445.5,500.1 L446.0,499.6 L446.5,499.9 L447.0,497.9 L447.5,498.3 L448.0,498.4 L448.5,498.7 L449.0,499.9 L449.5,500.6 L450.0,500.4 L450.5,499.1 L451.0,500.1 L451.5,499.2 L452.0,499.9 L452.5,500.1 L453.0,499.6 L453.5,496.9 L454.0,500.4 L454.5,500.6 L455.0,500.2 L455.5,499.4 L456.0,501.3 L456.5,499.9 L457.0,501.5 L457.5,501.1 L458.0,501.7 L458.5,501.6 L459.0,501.0 L459.5,500.8 L460.0,500.5 L460.5,501.1 L461.0,500.2 L461.5,501.1 L462.0,500.4 L462.5,500.4 L463.0,501.2 L463.5,501.2 L464.0,499.4 L464.5,501.2 L465.0,501.1 L465.5,500.3 L466.0,499.5 L466.5,500.4 L467.0,499.7 L467.5,498.5 L468.0,499.2 L468.5,500.4 L469.0,499.5 L469.5,500.1 L470.0,499.5 L470.5,500.0 L471.0,500.3 L471.5,500.1 L472.0,500.6 L472.5,499.5 L473.0,500.7 L473.5,500.7 L474.0,501.0 L474.5,500.6 L475.0,499.8 L475.5,501.4 L476.0,500.6 L476.5,499.5 L477.0,499.2 L477.5,499.4 L478.0,500.2 L478.5,500.5 L479.0,500.2 L479.5,500.4 L480.0,498.7 L480.5,498.7 L481.0,500.1 L481.5,497.2 L482.0,498.9 L482.5,499.3 L483.0,496.8 L483.5,498.8 L484.0,499.1 L484.5,499.1 L485.0,495.4 L485.5,499.1 L486.0,501.5 L486.5,502.2 L487.0,503.1 L487.5,503.9 L488.0,504.4 L488.0,509.3 L487.5,509.4 L487.0,509.7 L486.5,511.2 L486.0,512.3 L485.5,514.2 L485.0,514.2 L484.5,513.4 L484.0,515.5 L483.5,514.3 L483.0,513.9 L482.5,513.3 L482.0,513.8 L481.5,514.3 L481.0,514.5 L480.5,514.2 L480.0,512.7 L479.5,514.0 L479.0,512.8 L478.5,512.5 L478.0,513.6 L477.5,513.4 L477.0,512.5 L476.5,512.2 L476.0,512.3 L475.5,513.5 L475.0,512.7 L474.5,512.8 L474.0,514.7 L473.5,512.5 L473.0,512.9 L472.5,514.3 L472.0,512.5 L471.5,513.9 L471.0,513.7 L470.5,515.0 L470.0,513.4 L469.5,512.9 L469.0,514.8 L468.5,512.4 L468.0,513.2 L467.5,513.5 L467.0,513.0 L466.5,513.8 L466.0,512.9 L465.5,513.6 L465.0,512.2 L464.5,514.3 L464.0,511.9 L463.5,511.9 L463.0,513.8 L462.5,513.1 L462.0,513.3 L461.5,512.3 L461.0,511.8 L460.5,511.7 L460.0,513.2 L459.5,513.5 L459.0,511.8 L458.5,512.3 L458.0,512.1 L457.5,512.6 L457.0,511.8 L456.5,515.8 L456.0,513.2 L455.5,512.4 L455.0,512.1 L454.5,512.9 L454.0,513.2 L453.5,513.6 L453.0,513.4 L452.5,512.5 L452.0,513.4 L451.5,513.5 L451.0,513.5 L450.5,513.1 L450.0,512.5 L449.5,514.0 L449.0,513.1 L448.5,513.2 L448.0,512.7 L447.5,514.5 L447.0,514.4 L446.5,513.0 L446.0,513.5 L445.5,514.0 L445.0,513.5 L444.5,512.8 L444.0,517.1 L443.5,513.2 L443.0,514.5 L442.5,514.2 L442.0,513.6 L441.5,512.9 L441.0,512.9 L440.5,516.1 L440.0,512.9 L439.5,513.6 L439.0,517.1 L438.5,513.6 L438.0,513.7 L437.5,513.7 L437.0,513.0 L436.5,513.0 L436.0,513.8 L435.5,515.3 L435.0,515.9Z" fill="#b4d0a0"/>
<path d="M622.0,457.8 L622.5,453.9 L623.0,460.0 L623.5,460.5 L624.0,462.0 L624.5,458.1 L625.0,460.5 L625.5,462.2 L626.0,461.5 L626.5,461.4 L627.0,460.5 L627.5,460.4 L628.0,459.6 L628.5,460.8 L629.0,460.8 L629.5,458.3 L630.0,462.1 L630.5,462.0 L631.0,461.6 L631.5,458.7 L632.0,460.5 L632.5,462.3 L633.0,460.9 L633.5,461.7 L634.0,462.3 L634.5,461.5 L635.0,460.7 L635.5,461.9 L636.0,461.0 L636.5,462.9 L637.0,462.3 L637.5,461.3 L638.0,460.1 L638.5,460.5 L639.0,460.4 L639.5,461.4 L640.0,463.1 L640.5,460.9 L641.0,462.1 L641.5,462.3 L642.0,461.4 L642.5,460.9 L643.0,460.5 L643.5,462.9 L644.0,460.7 L644.5,460.5 L645.0,459.3 L645.5,463.0 L646.0,460.5 L646.5,460.5 L647.0,461.3 L647.5,460.2 L648.0,461.7 L648.5,462.1 L649.0,461.2 L649.5,462.4 L650.0,462.8 L650.5,461.3 L651.0,462.4 L651.5,461.3 L652.0,460.9 L652.5,460.8 L653.0,460.8 L653.5,461.6 L654.0,461.3 L654.5,460.2 L655.0,461.6 L655.5,456.5 L656.0,461.2 L656.5,460.4 L657.0,460.7 L657.5,461.6 L658.0,460.3 L658.5,456.4 L659.0,461.0 L659.5,459.5 L660.0,459.8 L660.5,459.4 L661.0,459.9 L661.5,460.1 L662.0,461.6 L662.5,460.8 L663.0,461.2 L663.5,456.6 L664.0,462.8 L664.5,461.0 L665.0,460.9 L665.5,462.2 L666.0,461.3 L666.5,461.8 L667.0,461.2 L667.5,461.0 L668.0,458.4 L668.5,460.9 L669.0,460.5 L669.5,461.6 L670.0,460.8 L670.5,461.2 L671.0,460.0 L671.5,461.1 L672.0,461.1 L672.5,462.0 L673.0,463.2 L673.5,465.1 L674.0,465.9 L674.5,466.5 L675.0,466.8 L675.0,472.2 L674.5,472.4 L674.0,472.7 L673.5,474.3 L673.0,475.0 L672.5,476.3 L672.0,478.7 L671.5,477.3 L671.0,477.5 L670.5,477.8 L670.0,477.0 L669.5,476.9 L669.0,477.9 L668.5,476.6 L668.0,478.2 L667.5,475.8 L667.0,477.4 L666.5,476.0 L666.0,477.1 L665.5,475.7 L665.0,476.8 L664.5,476.0 L664.0,477.0 L663.5,478.4 L663.0,475.9 L662.5,477.9 L662.0,477.2 L661.5,476.2 L661.0,479.6 L660.5,478.3 L660.0,478.3 L659.5,478.1 L659.0,480.4 L658.5,476.8 L658.0,477.7 L657.5,477.1 L657.0,476.3 L656.5,476.6 L656.0,476.3 L655.5,477.8 L655.0,477.3 L654.5,476.2 L654.0,476.0 L653.5,476.5 L653.0,476.9 L652.5,475.8 L652.0,477.0 L651.5,475.9 L651.0,477.1 L650.5,475.7 L650.0,478.2 L649.5,476.6 L649.0,476.2 L648.5,476.0 L648.0,476.1 L647.5,476.4 L647.0,477.1 L646.5,477.1 L646.0,477.0 L645.5,478.3 L645.0,477.1 L644.5,477.1 L644.0,477.1 L643.5,475.9 L643.0,476.2 L642.5,479.5 L642.0,476.7 L641.5,476.8 L641.0,476.9 L640.5,477.5 L640.0,478.6 L639.5,476.1 L639.0,476.1 L638.5,476.0 L638.0,476.1 L637.5,478.2 L637.0,477.2 L636.5,476.5 L636.0,475.4 L635.5,475.8 L635.0,476.4 L634.5,477.5 L634.0,477.6 L633.5,477.5 L633.0,477.6 L632.5,476.0 L632.0,477.7 L631.5,476.3 L631.0,477.2 L630.5,476.2 L630.0,476.7 L629.5,476.5 L629.0,477.6 L628.5,476.9 L628.0,481.6 L627.5,477.4 L627.0,476.8 L626.5,477.7 L626.0,477.1 L625.5,476.9 L625.0,476.8 L624.5,476.4 L624.0,476.9 L623.5,477.2 L623.0,477.5 L622.5,479.3 L622.0,478.3Z" fill="#b4d0a0"/><path d="M622.0,497.6 L622.5,491.5 L623.0,499.9 L623.5,500.4 L624.0,498.4 L624.5,498.2 L625.0,499.6 L625.5,499.8 L626.0,499.4 L626.5,498.0 L627.0,498.2 L627.5,496.8 L628.0,499.7 L628.5,499.9 L629.0,499.1 L629.5,498.6 L630.0,498.4 L630.5,500.2 L631.0,500.5 L631.5,500.0 L632.0,499.5 L632.5,499.6 L633.0,498.6 L633.5,499.3 L634.0,499.4 L634.5,500.3 L635.0,499.7 L635.5,500.8 L636.0,500.2 L636.5,499.9 L637.0,499.2 L637.5,500.6 L638.0,500.0 L638.5,498.7 L639.0,498.7 L639.5,498.8 L640.0,499.5 L640.5,497.5 L641.0,499.7 L641.5,499.7 L642.0,499.9 L642.5,500.4 L643.0,500.0 L643.5,500.6 L644.0,500.3 L644.5,499.0 L645.0,499.4 L645.5,499.6 L646.0,501.3 L646.5,499.3 L647.0,499.6 L647.5,500.7 L648.0,501.2 L648.5,499.7 L649.0,500.7 L649.5,501.4 L650.0,500.9 L650.5,500.4 L651.0,499.1 L651.5,501.4 L652.0,500.3 L652.5,498.4 L653.0,501.0 L653.5,500.3 L654.0,500.3 L654.5,500.0 L655.0,500.1 L655.5,501.2 L656.0,501.3 L656.5,499.8 L657.0,501.3 L657.5,500.4 L658.0,501.2 L658.5,500.4 L659.0,500.3 L659.5,501.7 L660.0,500.7 L660.5,501.3 L661.0,500.4 L661.5,501.8 L662.0,501.1 L662.5,501.2 L663.0,500.9 L663.5,502.0 L664.0,500.6 L664.5,501.2 L665.0,500.2 L665.5,500.4 L666.0,501.0 L666.5,500.0 L667.0,500.1 L667.5,499.0 L668.0,497.9 L668.5,501.2 L669.0,500.3 L669.5,498.5 L670.0,501.3 L670.5,500.1 L671.0,500.7 L671.5,500.4 L672.0,501.5 L672.5,499.8 L673.0,502.2 L673.5,503.6 L674.0,505.2 L674.5,504.9 L675.0,504.4 L675.0,509.2 L674.5,509.3 L674.0,509.3 L673.5,510.1 L673.0,511.3 L672.5,512.3 L672.0,512.6 L671.5,511.7 L671.0,512.6 L670.5,512.8 L670.0,512.3 L669.5,512.3 L669.0,512.6 L668.5,513.9 L668.0,512.4 L667.5,512.8 L667.0,512.1 L666.5,513.1 L666.0,512.4 L665.5,512.4 L665.0,512.6 L664.5,512.2 L664.0,512.2 L663.5,511.7 L663.0,512.8 L662.5,512.6 L662.0,511.9 L661.5,512.9 L661.0,512.0 L660.5,512.8 L660.0,511.9 L659.5,511.8 L659.0,512.5 L658.5,514.5 L658.0,512.3 L657.5,511.7 L657.0,511.8 L656.5,512.7 L656.0,512.1 L655.5,511.7 L655.0,512.3 L654.5,512.9 L654.0,512.2 L653.5,512.9 L653.0,512.5 L652.5,511.9 L652.0,514.8 L651.5,512.3 L651.0,512.5 L650.5,512.6 L650.0,512.7 L649.5,512.4 L649.0,512.3 L648.5,512.5 L648.0,513.3 L647.5,512.1 L647.0,513.0 L646.5,513.4 L646.0,512.4 L645.5,514.8 L645.0,513.5 L644.5,513.8 L644.0,512.9 L643.5,513.5 L643.0,512.1 L642.5,513.3 L642.0,513.0 L641.5,513.8 L641.0,512.8 L640.5,512.3 L640.0,513.3 L639.5,515.9 L639.0,513.1 L638.5,513.1 L638.0,513.3 L637.5,512.9 L637.0,513.2 L636.5,514.6 L636.0,513.8 L635.5,512.6 L635.0,512.8 L634.5,513.8 L634.0,512.6 L633.5,513.5 L633.0,512.7 L632.5,513.5 L632.0,512.8 L631.5,514.0 L631.0,513.6 L630.5,512.8 L630.0,513.9 L629.5,512.7 L629.0,513.2 L628.5,513.7 L628.0,514.6 L627.5,516.0 L627.0,514.1 L626.5,515.0 L626.0,514.0 L625.5,514.2 L625.0,513.0 L624.5,514.2 L624.0,514.2 L623.5,513.2 L623.0,514.4 L622.5,515.4 L622.0,514.3Z" fill="#b4d0a0"/>
<path d="M731.6,457.6 L732.1,457.4 L732.6,461.4 L733.1,461.5 L733.6,461.2 L734.1,460.5 L734.6,459.4 L735.1,461.6 L735.6,460.2 L736.1,461.5 L736.6,461.8 L737.1,459.9 L737.6,460.9 L738.1,461.1 L738.6,460.7 L739.1,460.4 L739.6,460.3 L740.1,459.5 L740.6,460.0 L741.1,460.0 L741.6,462.1 L742.1,461.5 L742.6,461.2 L743.1,461.1 L743.6,459.3 L744.1,459.2 L744.6,459.6 L745.1,455.4 L745.6,458.8 L746.1,460.1 L746.6,459.9 L747.1,459.1 L747.6,459.1 L748.1,457.3 L748.6,459.2 L749.1,461.0 L749.6,460.3 L750.1,457.4 L750.6,459.6 L751.1,459.1 L751.6,458.2 L752.1,459.1 L752.6,460.6 L753.1,457.0 L753.6,458.7 L754.1,458.5 L754.6,459.0 L755.1,458.7 L755.6,458.7 L756.1,459.0 L756.6,461.1 L757.1,457.5 L757.6,461.2 L758.1,455.4 L758.6,458.6 L759.1,456.9 L759.6,459.5 L760.1,459.9 L760.6,461.0 L761.1,453.9 L761.6,460.3 L762.1,459.8 L762.6,461.1 L763.1,459.8 L763.6,456.8 L764.1,458.3 L764.6,459.8 L765.1,458.9 L765.6,461.0 L766.1,461.2 L766.6,458.6 L767.1,458.8 L767.6,460.8 L768.1,459.5 L768.6,460.3 L769.1,458.5 L769.6,459.5 L770.1,458.8 L770.6,459.4 L771.1,461.2 L771.6,459.6 L772.1,460.8 L772.6,458.9 L773.1,460.3 L773.6,459.9 L774.1,459.6 L774.6,459.8 L775.1,458.6 L775.6,459.9 L776.1,458.3 L776.6,459.6 L777.1,458.9 L777.6,458.7 L778.1,460.3 L778.6,461.3 L779.1,459.0 L779.6,457.6 L780.1,456.3 L780.6,460.2 L781.1,461.1 L781.6,459.2 L782.1,461.5 L782.6,460.7 L783.1,462.0 L783.6,459.8 L784.1,459.6 L784.6,457.5 L785.1,458.8 L785.6,461.2 L786.1,459.9 L786.6,460.1 L787.1,461.7 L787.6,459.8 L788.1,459.1 L788.6,459.6 L789.1,459.6 L789.6,460.6 L790.1,453.4 L790.6,458.2 L791.1,459.4 L791.6,460.0 L792.1,460.9 L792.6,460.1 L793.1,461.1 L793.6,461.3 L794.1,461.0 L794.6,460.0 L795.1,460.4 L795.6,461.7 L796.1,461.3 L796.6,459.1 L797.1,455.9 L797.6,458.7 L798.1,461.3 L798.6,460.1 L799.1,461.0 L799.6,455.7 L800.1,458.4 L800.6,460.6 L801.1,460.1 L801.6,458.4 L802.1,459.7 L802.6,453.3 L803.1,460.0 L803.6,461.1 L804.1,459.3 L804.6,459.1 L805.1,459.7 L805.6,460.6 L806.1,460.4 L806.6,461.0 L807.1,460.5 L807.6,461.1 L808.1,457.8 L808.6,459.6 L809.1,458.5 L809.6,460.6 L810.1,459.2 L810.6,459.5 L811.1,459.8 L811.6,459.9 L812.1,458.3 L812.6,458.7 L813.1,458.6 L813.6,460.4 L814.1,458.7 L814.6,460.2 L815.1,460.0 L815.6,460.3 L816.1,461.2 L816.6,456.3 L817.1,457.6 L817.6,460.5 L818.1,459.7 L818.6,459.0 L819.1,458.4 L819.6,460.1 L820.1,460.2 L820.6,459.2 L821.1,460.2 L821.6,459.8 L822.1,460.7 L822.6,459.3 L823.1,457.6 L823.6,459.6 L824.1,461.0 L824.6,460.1 L825.1,461.1 L825.6,455.8 L826.1,456.9 L826.6,460.3 L827.1,460.8 L827.6,460.4 L828.1,456.0 L828.6,461.4 L829.1,460.5 L829.6,460.9 L830.1,460.8 L830.6,460.6 L831.1,462.0 L831.6,461.9 L832.1,461.6 L832.6,460.7 L833.1,456.9 L833.6,460.9 L834.1,460.7 L834.6,460.4 L835.1,460.2 L835.6,461.5 L836.1,461.5 L836.6,461.3 L837.1,460.1 L837.6,459.9 L838.1,462.2 L838.6,460.8 L839.1,459.7 L839.6,459.9 L840.1,460.7 L840.6,462.1 L841.1,465.4 L841.6,467.2 L842.1,466.7 L842.1,472.3 L841.6,473.3 L841.1,475.9 L840.6,475.9 L840.1,478.5 L839.6,476.7 L839.1,476.1 L838.6,476.1 L838.1,476.2 L837.6,476.2 L837.1,477.6 L836.6,480.0 L836.1,477.6 L835.6,476.9 L835.1,477.5 L834.6,477.7 L834.1,476.2 L833.6,479.6 L833.1,477.9 L832.6,476.6 L832.1,477.1 L831.6,477.8 L831.1,477.5 L830.6,477.6 L830.1,477.0 L829.6,477.4 L829.1,477.2 L828.6,478.1 L828.1,477.2 L827.6,478.1 L827.1,476.5 L826.6,476.5 L826.1,478.1 L825.6,478.1 L825.1,476.7 L824.6,481.3 L824.1,477.8 L823.6,477.3 L823.1,481.2 L822.6,480.5 L822.1,477.9 L821.6,477.2 L821.1,476.6 L820.6,477.4 L820.1,480.5 L819.6,477.1 L819.1,478.3 L818.6,477.6 L818.1,478.5 L817.6,477.2 L817.1,477.2 L816.6,477.2 L816.1,477.0 L815.6,477.6 L815.1,478.9 L814.6,478.5 L814.1,477.8 L813.6,477.6 L813.1,478.4 L812.6,481.2 L812.1,478.4 L811.6,477.9 L811.1,478.5 L810.6,479.8 L810.1,477.5 L809.6,477.0 L809.1,477.3 L808.6,477.5 L808.1,478.2 L807.6,476.7 L807.1,477.9 L806.6,478.6 L806.1,477.8 L805.6,479.9 L805.1,479.8 L804.6,477.4 L804.1,478.6 L803.6,476.6 L803.1,478.9 L802.6,478.3 L802.1,479.4 L801.6,479.3 L801.1,479.0 L800.6,477.0 L800.1,480.7 L799.6,478.0 L799.1,481.2 L798.6,477.0 L798.1,478.3 L797.6,480.5 L797.1,478.9 L796.6,477.1 L796.1,481.9 L795.6,477.6 L795.1,476.5 L794.6,478.2 L794.1,476.8 L793.6,477.6 L793.1,476.9 L792.6,476.7 L792.1,477.9 L791.6,480.6 L791.1,476.6 L790.6,477.0 L790.1,479.4 L789.6,482.2 L789.1,478.6 L788.6,477.0 L788.1,477.9 L787.6,480.0 L787.1,478.2 L786.6,476.4 L786.1,478.1 L785.6,477.0 L785.1,477.1 L784.6,477.1 L784.1,477.6 L783.6,476.8 L783.1,476.5 L782.6,477.9 L782.1,476.8 L781.6,476.5 L781.1,476.8 L780.6,476.6 L780.1,477.5 L779.6,476.8 L779.1,476.7 L778.6,478.6 L778.1,477.3 L777.6,478.1 L777.1,478.5 L776.6,477.4 L776.1,477.6 L775.6,477.1 L775.1,477.9 L774.6,477.8 L774.1,479.7 L773.6,479.0 L773.1,481.4 L772.6,477.2 L772.1,478.8 L771.6,478.7 L771.1,479.0 L770.6,479.1 L770.1,478.6 L769.6,478.4 L769.1,477.2 L768.6,479.3 L768.1,477.8 L767.6,477.4 L767.1,477.1 L766.6,477.3 L766.1,478.0 L765.6,478.7 L765.1,477.4 L764.6,478.7 L764.1,478.8 L763.6,479.1 L763.1,477.2 L762.6,478.6 L762.1,477.1 L761.6,477.3 L761.1,477.9 L760.6,478.6 L760.1,478.9 L759.6,477.0 L759.1,477.1 L758.6,479.8 L758.1,478.5 L757.6,477.3 L757.1,476.9 L756.6,477.8 L756.1,479.2 L755.6,478.5 L755.1,477.7 L754.6,478.4 L754.1,477.3 L753.6,477.5 L753.1,477.6 L752.6,480.7 L752.1,479.3 L751.6,478.5 L751.1,477.1 L750.6,478.6 L750.1,478.0 L749.6,478.0 L749.1,478.4 L748.6,477.8 L748.1,477.7 L747.6,477.6 L747.1,481.6 L746.6,477.3 L746.1,478.6 L745.6,478.7 L745.1,477.0 L744.6,482.4 L744.1,477.7 L743.6,477.9 L743.1,478.0 L742.6,476.7 L742.1,477.9 L741.6,478.0 L741.1,477.1 L740.6,476.2 L740.1,476.8 L739.6,476.9 L739.1,476.9 L738.6,477.4 L738.1,476.2 L737.6,478.1 L737.1,477.8 L736.6,477.2 L736.1,478.9 L735.6,476.8 L735.1,478.2 L734.6,477.6 L734.1,478.0 L733.6,477.6 L733.1,476.4 L732.6,476.6 L732.1,478.5 L731.6,480.5Z" fill="#b4d0a0"/><path d="M731.6,498.5 L732.1,496.9 L732.6,499.3 L733.1,498.4 L733.6,498.8 L734.1,499.5 L734.6,498.7 L735.1,499.1 L735.6,499.0 L736.1,498.9 L736.6,500.2 L737.1,498.6 L737.6,499.7 L738.1,499.0 L738.6,499.8 L739.1,496.7 L739.6,500.1 L740.1,498.7 L740.6,499.4 L741.1,501.0 L741.6,499.9 L742.1,499.7 L742.6,500.5 L743.1,500.8 L743.6,500.9 L744.1,500.4 L744.6,501.4 L745.1,500.6 L745.6,499.9 L746.1,500.0 L746.6,499.6 L747.1,499.9 L747.6,500.0 L748.1,499.0 L748.6,499.6 L749.1,501.1 L749.6,500.4 L750.1,500.9 L750.6,499.7 L751.1,500.3 L751.6,500.9 L752.1,499.8 L752.6,500.5 L753.1,500.2 L753.6,498.7 L754.1,499.5 L754.6,499.0 L755.1,498.5 L755.6,497.6 L756.1,499.1 L756.6,499.1 L757.1,497.2 L757.6,498.6 L758.1,498.8 L758.6,499.9 L759.1,500.3 L759.6,494.2 L760.1,500.0 L760.6,500.1 L761.1,498.2 L761.6,495.6 L762.1,498.2 L762.6,499.4 L763.1,500.2 L763.6,498.6 L764.1,500.0 L764.6,499.9 L765.1,499.1 L765.6,499.1 L766.1,499.6 L766.6,494.7 L767.1,499.1 L767.6,498.0 L768.1,500.1 L768.6,500.3 L769.1,497.9 L769.6,499.6 L770.1,499.9 L770.6,498.9 L771.1,497.5 L771.6,499.1 L772.1,500.2 L772.6,499.3 L773.1,500.6 L773.6,500.3 L774.1,498.2 L774.6,498.9 L775.1,500.8 L775.6,500.7 L776.1,499.9 L776.6,500.7 L777.1,500.0 L777.6,500.1 L778.1,499.3 L778.6,500.7 L779.1,499.7 L779.6,499.5 L780.1,500.9 L780.6,500.7 L781.1,500.4 L781.6,496.5 L782.1,499.5 L782.6,500.2 L783.1,499.6 L783.6,501.5 L784.1,500.5 L784.6,501.0 L785.1,500.1 L785.6,501.0 L786.1,499.6 L786.6,501.3 L787.1,501.0 L787.6,500.2 L788.1,501.2 L788.6,500.1 L789.1,499.2 L789.6,501.7 L790.1,501.4 L790.6,500.5 L791.1,501.6 L791.6,501.4 L792.1,500.7 L792.6,500.4 L793.1,498.8 L793.6,500.8 L794.1,501.1 L794.6,501.3 L795.1,500.1 L795.6,497.9 L796.1,497.5 L796.6,496.6 L797.1,499.7 L797.6,497.5 L798.1,500.4 L798.6,498.0 L799.1,499.1 L799.6,500.3 L800.1,500.8 L800.6,498.9 L801.1,498.8 L801.6,500.4 L802.1,500.0 L802.6,498.2 L803.1,499.8 L803.6,498.9 L804.1,499.8 L804.6,499.4 L805.1,495.7 L805.6,495.5 L806.1,500.7 L806.6,500.4 L807.1,500.3 L807.6,499.8 L808.1,499.9 L808.6,498.9 L809.1,498.8 L809.6,500.5 L810.1,496.6 L810.6,498.9 L811.1,499.8 L811.6,499.7 L812.1,498.5 L812.6,500.4 L813.1,498.6 L813.6,496.4 L814.1,499.2 L814.6,499.9 L815.1,498.7 L815.6,500.5 L816.1,499.1 L816.6,499.4 L817.1,500.5 L817.6,499.8 L818.1,499.5 L818.6,499.6 L819.1,498.7 L819.6,499.1 L820.1,499.3 L820.6,499.7 L821.1,499.7 L821.6,499.3 L822.1,500.6 L822.6,497.4 L823.1,499.1 L823.6,499.8 L824.1,500.2 L824.6,501.0 L825.1,500.5 L825.6,501.2 L826.1,501.7 L826.6,501.3 L827.1,501.2 L827.6,500.9 L828.1,499.8 L828.6,501.2 L829.1,499.7 L829.6,500.9 L830.1,501.5 L830.6,500.0 L831.1,501.1 L831.6,500.5 L832.1,499.5 L832.6,499.8 L833.1,501.1 L833.6,500.3 L834.1,500.4 L834.6,499.2 L835.1,499.8 L835.6,499.3 L836.1,500.8 L836.6,499.0 L837.1,501.4 L837.6,501.1 L838.1,501.7 L838.6,501.2 L839.1,500.2 L839.6,498.7 L840.1,500.8 L840.6,502.6 L841.1,503.0 L841.6,504.5 L842.1,504.9 L842.1,509.1 L841.6,509.7 L841.1,511.0 L840.6,512.0 L840.1,512.6 L839.6,512.8 L839.1,511.8 L838.6,512.2 L838.1,511.7 L837.6,512.7 L837.1,512.1 L836.6,513.2 L836.1,512.6 L835.6,514.9 L835.1,513.2 L834.6,512.2 L834.1,515.9 L833.6,512.2 L833.1,514.3 L832.6,512.1 L832.1,512.7 L831.6,513.4 L831.1,512.4 L830.6,512.6 L830.1,512.7 L829.6,513.2 L829.1,512.0 L828.6,512.7 L828.1,513.6 L827.6,511.9 L827.1,513.5 L826.6,512.2 L826.1,511.9 L825.6,513.1 L825.1,512.9 L824.6,512.4 L824.1,513.1 L823.6,513.3 L823.1,513.4 L822.6,512.8 L822.1,512.5 L821.6,513.3 L821.1,512.2 L820.6,512.4 L820.1,513.6 L819.6,512.5 L819.1,512.8 L818.6,512.8 L818.1,515.5 L817.6,512.7 L817.1,512.8 L816.6,513.1 L816.1,514.0 L815.6,514.1 L815.1,513.2 L814.6,514.4 L814.1,513.3 L813.6,514.3 L813.1,513.0 L812.6,513.6 L812.1,513.5 L811.6,516.7 L811.1,514.2 L810.6,514.4 L810.1,513.0 L809.6,515.9 L809.1,512.7 L808.6,512.9 L808.1,514.0 L807.6,514.1 L807.1,514.2 L806.6,513.7 L806.1,512.6 L805.6,515.9 L805.1,512.6 L804.6,513.4 L804.1,513.7 L803.6,513.5 L803.1,516.7 L802.6,514.3 L802.1,513.4 L801.6,513.9 L801.1,513.7 L800.6,513.1 L800.1,513.0 L799.6,513.3 L799.1,513.2 L798.6,512.8 L798.1,512.4 L797.6,512.9 L797.1,512.6 L796.6,513.6 L796.1,512.5 L795.6,512.1 L795.1,513.8 L794.6,513.0 L794.1,514.3 L793.6,512.3 L793.1,511.8 L792.6,512.0 L792.1,512.2 L791.6,512.6 L791.1,512.3 L790.6,513.2 L790.1,512.8 L789.6,514.8 L789.1,512.5 L788.6,513.3 L788.1,513.0 L787.6,512.3 L787.1,512.4 L786.6,512.3 L786.1,513.1 L785.6,513.7 L785.1,513.4 L784.6,511.9 L784.1,512.6 L783.6,513.3 L783.1,512.8 L782.6,512.4 L782.1,512.6 L781.6,512.3 L781.1,512.2 L780.6,515.4 L780.1,512.6 L779.6,512.1 L779.1,512.3 L778.6,512.5 L778.1,513.7 L777.6,513.4 L777.1,512.5 L776.6,513.7 L776.1,513.3 L775.6,514.0 L775.1,513.3 L774.6,513.7 L774.1,514.3 L773.6,513.4 L773.1,514.1 L772.6,512.8 L772.1,514.2 L771.6,513.4 L771.1,512.7 L770.6,515.5 L770.1,516.0 L769.6,514.5 L769.1,513.0 L768.6,513.9 L768.1,514.4 L767.6,512.8 L767.1,514.6 L766.6,513.0 L766.1,512.9 L765.6,513.6 L765.1,514.3 L764.6,513.3 L764.1,513.5 L763.6,513.8 L763.1,513.6 L762.6,514.2 L762.1,515.4 L761.6,514.2 L761.1,512.7 L760.6,516.8 L760.1,512.9 L759.6,513.9 L759.1,513.9 L758.6,514.1 L758.1,514.6 L757.6,513.6 L757.1,514.1 L756.6,514.1 L756.1,513.0 L755.6,513.5 L755.1,514.5 L754.6,513.5 L754.1,512.6 L753.6,513.6 L753.1,513.7 L752.6,513.5 L752.1,512.5 L751.6,512.4 L751.1,512.6 L750.6,513.3 L750.1,513.7 L749.6,513.7 L749.1,513.1 L748.6,513.4 L748.1,512.2 L747.6,514.8 L747.1,513.2 L746.6,512.2 L746.1,512.4 L745.6,513.3 L745.1,514.6 L744.6,512.6 L744.1,512.9 L743.6,513.4 L743.1,512.8 L742.6,513.1 L742.1,512.0 L741.6,515.0 L741.1,512.2 L740.6,512.4 L740.1,514.0 L739.6,513.6 L739.1,515.7 L738.6,512.8 L738.1,514.1 L737.6,515.1 L737.1,513.3 L736.6,513.5 L736.1,513.4 L735.6,514.0 L735.1,514.0 L734.6,513.1 L734.1,513.5 L733.6,513.2 L733.1,514.1 L732.6,513.1 L732.1,515.9 L731.6,514.5Z" fill="#b4d0a0"/>
<rect x="74.35" y="589.65" width="781.3" height="87.10" fill="#96704f" stroke="#d98f4a" stroke-width="1.5"/>
<path d="M75.1,676 C84,625 112,595 178,590.6 L75.1,590.6 Z" fill="#4e5363"/>
<rect x="74" y="606.35" width="782" height="1.5" fill="rgba(240,205,175,0.7)"/>
<rect x="74" y="643.75" width="782" height="1.5" fill="rgba(240,205,175,0.7)"/>
<path d="M86.0,603.6 L86.5,604.1 L87.0,604.6 L87.5,604.8 L88.0,604.7 L88.5,604.2 L89.0,603.7 L89.5,604.0 L90.0,603.8 L90.5,603.9 L91.0,603.5 L91.5,604.2 L92.0,604.7 L92.5,605.0 L93.0,604.7 L93.5,604.9 L94.0,605.2 L94.5,604.8 L95.0,605.7 L95.5,605.5 L96.0,605.8 L96.5,605.4 L97.0,605.2 L97.5,605.3 L98.0,604.9 L98.5,605.1 L99.0,605.5 L99.5,605.5 L100.0,605.1 L100.5,605.1 L101.0,605.2 L101.5,605.1 L102.0,605.1 L102.5,605.0 L103.0,605.4 L103.5,604.1 L104.0,605.2 L104.5,605.1 L105.0,605.6 L105.5,604.8 L106.0,605.1 L106.5,604.7 L107.0,604.9 L107.5,604.9 L108.0,604.3 L108.5,604.6 L109.0,605.0 L109.5,604.9 L110.0,604.8 L110.5,604.4 L111.0,604.9 L111.5,605.0 L112.0,604.5 L112.5,604.2 L113.0,604.7 L113.5,604.7 L114.0,604.0 L114.5,605.3 L115.0,605.3 L115.5,604.7 L116.0,605.3 L116.5,605.0 L117.0,605.4 L117.5,605.5 L118.0,605.5 L118.5,605.6 L119.0,605.7 L119.5,605.4 L120.0,605.3 L120.5,603.9 L121.0,605.2 L121.5,605.1 L122.0,605.4 L122.5,604.9 L123.0,604.9 L123.5,605.1 L124.0,604.9 L124.5,604.7 L125.0,604.7 L125.5,605.2 L126.0,605.2 L126.5,605.0 L127.0,605.4 L127.5,605.3 L128.0,605.4 L128.5,605.3 L129.0,605.7 L129.5,605.2 L130.0,605.5 L130.5,605.8 L131.0,605.5 L131.5,605.4 L132.0,605.0 L132.5,604.6 L133.0,604.9 L133.5,604.7 L134.0,604.6 L134.5,604.3 L135.0,604.5 L135.5,604.9 L136.0,605.1 L136.5,605.2 L137.0,605.4 L137.5,605.8 L138.0,605.9 L138.5,606.3 L139.0,606.5 L139.0,607.8 L138.5,607.8 L138.0,608.2 L137.5,608.4 L137.0,609.8 L136.5,609.9 L136.0,609.2 L135.5,609.5 L135.0,609.6 L134.5,609.8 L134.0,609.4 L133.5,609.8 L133.0,609.2 L132.5,609.6 L132.0,609.3 L131.5,608.9 L131.0,608.5 L130.5,608.7 L130.0,608.7 L129.5,608.8 L129.0,608.7 L128.5,609.3 L128.0,608.6 L127.5,609.4 L127.0,608.7 L126.5,609.0 L126.0,609.0 L125.5,609.1 L125.0,609.1 L124.5,609.3 L124.0,609.0 L123.5,609.7 L123.0,609.2 L122.5,609.4 L122.0,609.7 L121.5,608.7 L121.0,608.9 L120.5,609.3 L120.0,609.0 L119.5,609.0 L119.0,608.7 L118.5,608.8 L118.0,608.8 L117.5,608.5 L117.0,608.7 L116.5,609.3 L116.0,608.9 L115.5,609.2 L115.0,609.0 L114.5,609.5 L114.0,609.2 L113.5,609.8 L113.0,609.5 L112.5,609.8 L112.0,610.1 L111.5,609.4 L111.0,609.5 L110.5,609.6 L110.0,609.6 L109.5,610.0 L109.0,609.3 L108.5,609.6 L108.0,609.1 L107.5,609.2 L107.0,609.9 L106.5,609.4 L106.0,609.2 L105.5,609.3 L105.0,608.9 L104.5,609.0 L104.0,609.0 L103.5,609.2 L103.0,609.2 L102.5,609.3 L102.0,609.1 L101.5,609.5 L101.0,609.1 L100.5,609.7 L100.0,608.6 L99.5,609.2 L99.0,608.4 L98.5,608.7 L98.0,608.6 L97.5,608.7 L97.0,608.7 L96.5,608.9 L96.0,608.8 L95.5,608.4 L95.0,608.6 L94.5,608.7 L94.0,609.6 L93.5,610.0 L93.0,611.1 L92.5,609.2 L92.0,610.0 L91.5,610.6 L91.0,610.6 L90.5,610.4 L90.0,610.9 L89.5,610.1 L89.0,610.5 L88.5,610.4 L88.0,609.5 L87.5,609.6 L87.0,610.1 L86.5,611.5 L86.0,611.1Z" fill="#f1d3b6"/><path d="M86.0,639.8 L86.5,641.4 L87.0,642.2 L87.5,641.9 L88.0,641.5 L88.5,641.8 L89.0,641.5 L89.5,641.8 L90.0,641.5 L90.5,641.6 L91.0,641.4 L91.5,641.8 L92.0,639.7 L92.5,641.0 L93.0,641.6 L93.5,641.0 L94.0,641.9 L94.5,642.3 L95.0,642.1 L95.5,642.0 L96.0,641.8 L96.5,641.3 L97.0,641.2 L97.5,641.2 L98.0,642.1 L98.5,640.5 L99.0,641.2 L99.5,642.0 L100.0,641.8 L100.5,642.5 L101.0,642.7 L101.5,642.1 L102.0,642.3 L102.5,642.4 L103.0,642.5 L103.5,643.3 L104.0,643.4 L104.5,643.3 L105.0,643.0 L105.5,642.8 L106.0,642.7 L106.5,642.4 L107.0,642.5 L107.5,642.2 L108.0,642.4 L108.5,642.6 L109.0,642.6 L109.5,642.3 L110.0,642.0 L110.5,642.3 L111.0,642.0 L111.5,641.6 L112.0,641.1 L112.5,641.3 L113.0,641.5 L113.5,641.9 L114.0,641.6 L114.5,640.6 L115.0,641.8 L115.5,642.3 L116.0,642.3 L116.5,642.3 L117.0,642.2 L117.5,642.2 L118.0,642.2 L118.5,641.7 L119.0,641.4 L119.5,641.7 L120.0,639.9 L120.5,641.5 L121.0,641.8 L121.5,642.1 L122.0,641.6 L122.5,641.8 L123.0,641.2 L123.5,641.8 L124.0,641.1 L124.5,641.0 L125.0,641.2 L125.5,641.7 L126.0,641.3 L126.5,641.7 L127.0,641.6 L127.5,641.0 L128.0,641.5 L128.5,639.8 L129.0,641.1 L129.5,639.4 L130.0,641.5 L130.5,641.0 L131.0,641.8 L131.5,641.0 L132.0,641.4 L132.5,641.7 L133.0,641.8 L133.5,641.4 L134.0,640.8 L134.5,641.6 L135.0,642.1 L135.5,641.8 L136.0,641.7 L136.5,642.2 L137.0,642.1 L137.5,642.0 L138.0,643.3 L138.5,643.7 L139.0,643.6 L139.0,645.8 L138.5,645.2 L138.0,645.9 L137.5,646.2 L137.0,647.3 L136.5,647.0 L136.0,646.9 L135.5,646.8 L135.0,647.2 L134.5,646.8 L134.0,647.4 L133.5,648.9 L133.0,647.6 L132.5,647.2 L132.0,647.8 L131.5,648.5 L131.0,647.2 L130.5,647.3 L130.0,647.4 L129.5,647.4 L129.0,648.3 L128.5,647.6 L128.0,647.2 L127.5,647.1 L127.0,647.1 L126.5,647.0 L126.0,647.5 L125.5,647.9 L125.0,647.1 L124.5,647.1 L124.0,647.2 L123.5,647.6 L123.0,647.1 L122.5,646.8 L122.0,647.3 L121.5,647.1 L121.0,647.0 L120.5,647.4 L120.0,647.0 L119.5,647.8 L119.0,647.0 L118.5,647.2 L118.0,646.7 L117.5,646.6 L117.0,647.0 L116.5,646.6 L116.0,646.8 L115.5,647.0 L115.0,646.7 L114.5,647.1 L114.0,647.6 L113.5,647.1 L113.0,647.1 L112.5,647.1 L112.0,647.7 L111.5,647.0 L111.0,646.7 L110.5,646.8 L110.0,647.0 L109.5,647.0 L109.0,646.6 L108.5,646.8 L108.0,646.7 L107.5,646.8 L107.0,646.5 L106.5,646.4 L106.0,646.5 L105.5,646.2 L105.0,646.1 L104.5,646.1 L104.0,645.5 L103.5,646.0 L103.0,646.7 L102.5,646.3 L102.0,647.1 L101.5,646.8 L101.0,646.3 L100.5,646.8 L100.0,646.9 L99.5,647.3 L99.0,647.0 L98.5,648.9 L98.0,646.8 L97.5,647.2 L97.0,647.5 L96.5,647.1 L96.0,647.0 L95.5,647.5 L95.0,646.8 L94.5,646.9 L94.0,646.8 L93.5,647.4 L93.0,647.1 L92.5,647.1 L92.0,647.1 L91.5,647.1 L91.0,647.3 L90.5,646.9 L90.0,646.9 L89.5,647.1 L89.0,647.2 L88.5,647.0 L88.0,647.1 L87.5,646.9 L87.0,647.2 L86.5,647.5 L86.0,647.9Z" fill="#f1d3b6"/>
<g clip-path="url(#fade)"><path d="M86.0,603.6 L86.5,604.1 L87.0,604.6 L87.5,604.8 L88.0,604.7 L88.5,604.2 L89.0,603.7 L89.5,604.0 L90.0,603.8 L90.5,603.9 L91.0,603.5 L91.5,604.2 L92.0,604.7 L92.5,605.0 L93.0,604.7 L93.5,604.9 L94.0,605.2 L94.5,604.8 L95.0,605.7 L95.5,605.5 L96.0,605.8 L96.5,605.4 L97.0,605.2 L97.5,605.3 L98.0,604.9 L98.5,605.1 L99.0,605.5 L99.5,605.5 L100.0,605.1 L100.5,605.1 L101.0,605.2 L101.5,605.1 L102.0,605.1 L102.5,605.0 L103.0,605.4 L103.5,604.1 L104.0,605.2 L104.5,605.1 L105.0,605.6 L105.5,604.8 L106.0,605.1 L106.5,604.7 L107.0,604.9 L107.5,604.9 L108.0,604.3 L108.5,604.6 L109.0,605.0 L109.5,604.9 L110.0,604.8 L110.5,604.4 L111.0,604.9 L111.5,605.0 L112.0,604.5 L112.5,604.2 L113.0,604.7 L113.5,604.7 L114.0,604.0 L114.5,605.3 L115.0,605.3 L115.5,604.7 L116.0,605.3 L116.5,605.0 L117.0,605.4 L117.5,605.5 L118.0,605.5 L118.5,605.6 L119.0,605.7 L119.5,605.4 L120.0,605.3 L120.5,603.9 L121.0,605.2 L121.5,605.1 L122.0,605.4 L122.5,604.9 L123.0,604.9 L123.5,605.1 L124.0,604.9 L124.5,604.7 L125.0,604.7 L125.5,605.2 L126.0,605.2 L126.5,605.0 L127.0,605.4 L127.5,605.3 L128.0,605.4 L128.5,605.3 L129.0,605.7 L129.5,605.2 L130.0,605.5 L130.5,605.8 L131.0,605.5 L131.5,605.4 L132.0,605.0 L132.5,604.6 L133.0,604.9 L133.5,604.7 L134.0,604.6 L134.5,604.3 L135.0,604.5 L135.5,604.9 L136.0,605.1 L136.5,605.2 L137.0,605.4 L137.5,605.8 L138.0,605.9 L138.5,606.3 L139.0,606.5 L139.0,607.8 L138.5,607.8 L138.0,608.2 L137.5,608.4 L137.0,609.8 L136.5,609.9 L136.0,609.2 L135.5,609.5 L135.0,609.6 L134.5,609.8 L134.0,609.4 L133.5,609.8 L133.0,609.2 L132.5,609.6 L132.0,609.3 L131.5,608.9 L131.0,608.5 L130.5,608.7 L130.0,608.7 L129.5,608.8 L129.0,608.7 L128.5,609.3 L128.0,608.6 L127.5,609.4 L127.0,608.7 L126.5,609.0 L126.0,609.0 L125.5,609.1 L125.0,609.1 L124.5,609.3 L124.0,609.0 L123.5,609.7 L123.0,609.2 L122.5,609.4 L122.0,609.7 L121.5,608.7 L121.0,608.9 L120.5,609.3 L120.0,609.0 L119.5,609.0 L119.0,608.7 L118.5,608.8 L118.0,608.8 L117.5,608.5 L117.0,608.7 L116.5,609.3 L116.0,608.9 L115.5,609.2 L115.0,609.0 L114.5,609.5 L114.0,609.2 L113.5,609.8 L113.0,609.5 L112.5,609.8 L112.0,610.1 L111.5,609.4 L111.0,609.5 L110.5,609.6 L110.0,609.6 L109.5,610.0 L109.0,609.3 L108.5,609.6 L108.0,609.1 L107.5,609.2 L107.0,609.9 L106.5,609.4 L106.0,609.2 L105.5,609.3 L105.0,608.9 L104.5,609.0 L104.0,609.0 L103.5,609.2 L103.0,609.2 L102.5,609.3 L102.0,609.1 L101.5,609.5 L101.0,609.1 L100.5,609.7 L100.0,608.6 L99.5,609.2 L99.0,608.4 L98.5,608.7 L98.0,608.6 L97.5,608.7 L97.0,608.7 L96.5,608.9 L96.0,608.8 L95.5,608.4 L95.0,608.6 L94.5,608.7 L94.0,609.6 L93.5,610.0 L93.0,611.1 L92.5,609.2 L92.0,610.0 L91.5,610.6 L91.0,610.6 L90.5,610.4 L90.0,610.9 L89.5,610.1 L89.0,610.5 L88.5,610.4 L88.0,609.5 L87.5,609.6 L87.0,610.1 L86.5,611.5 L86.0,611.1Z" fill="#f4f4f4"/><path d="M86.0,639.8 L86.5,641.4 L87.0,642.2 L87.5,641.9 L88.0,641.5 L88.5,641.8 L89.0,641.5 L89.5,641.8 L90.0,641.5 L90.5,641.6 L91.0,641.4 L91.5,641.8 L92.0,639.7 L92.5,641.0 L93.0,641.6 L93.5,641.0 L94.0,641.9 L94.5,642.3 L95.0,642.1 L95.5,642.0 L96.0,641.8 L96.5,641.3 L97.0,641.2 L97.5,641.2 L98.0,642.1 L98.5,640.5 L99.0,641.2 L99.5,642.0 L100.0,641.8 L100.5,642.5 L101.0,642.7 L101.5,642.1 L102.0,642.3 L102.5,642.4 L103.0,642.5 L103.5,643.3 L104.0,643.4 L104.5,643.3 L105.0,643.0 L105.5,642.8 L106.0,642.7 L106.5,642.4 L107.0,642.5 L107.5,642.2 L108.0,642.4 L108.5,642.6 L109.0,642.6 L109.5,642.3 L110.0,642.0 L110.5,642.3 L111.0,642.0 L111.5,641.6 L112.0,641.1 L112.5,641.3 L113.0,641.5 L113.5,641.9 L114.0,641.6 L114.5,640.6 L115.0,641.8 L115.5,642.3 L116.0,642.3 L116.5,642.3 L117.0,642.2 L117.5,642.2 L118.0,642.2 L118.5,641.7 L119.0,641.4 L119.5,641.7 L120.0,639.9 L120.5,641.5 L121.0,641.8 L121.5,642.1 L122.0,641.6 L122.5,641.8 L123.0,641.2 L123.5,641.8 L124.0,641.1 L124.5,641.0 L125.0,641.2 L125.5,641.7 L126.0,641.3 L126.5,641.7 L127.0,641.6 L127.5,641.0 L128.0,641.5 L128.5,639.8 L129.0,641.1 L129.5,639.4 L130.0,641.5 L130.5,641.0 L131.0,641.8 L131.5,641.0 L132.0,641.4 L132.5,641.7 L133.0,641.8 L133.5,641.4 L134.0,640.8 L134.5,641.6 L135.0,642.1 L135.5,641.8 L136.0,641.7 L136.5,642.2 L137.0,642.1 L137.5,642.0 L138.0,643.3 L138.5,643.7 L139.0,643.6 L139.0,645.8 L138.5,645.2 L138.0,645.9 L137.5,646.2 L137.0,647.3 L136.5,647.0 L136.0,646.9 L135.5,646.8 L135.0,647.2 L134.5,646.8 L134.0,647.4 L133.5,648.9 L133.0,647.6 L132.5,647.2 L132.0,647.8 L131.5,648.5 L131.0,647.2 L130.5,647.3 L130.0,647.4 L129.5,647.4 L129.0,648.3 L128.5,647.6 L128.0,647.2 L127.5,647.1 L127.0,647.1 L126.5,647.0 L126.0,647.5 L125.5,647.9 L125.0,647.1 L124.5,647.1 L124.0,647.2 L123.5,647.6 L123.0,647.1 L122.5,646.8 L122.0,647.3 L121.5,647.1 L121.0,647.0 L120.5,647.4 L120.0,647.0 L119.5,647.8 L119.0,647.0 L118.5,647.2 L118.0,646.7 L117.5,646.6 L117.0,647.0 L116.5,646.6 L116.0,646.8 L115.5,647.0 L115.0,646.7 L114.5,647.1 L114.0,647.6 L113.5,647.1 L113.0,647.1 L112.5,647.1 L112.0,647.7 L111.5,647.0 L111.0,646.7 L110.5,646.8 L110.0,647.0 L109.5,647.0 L109.0,646.6 L108.5,646.8 L108.0,646.7 L107.5,646.8 L107.0,646.5 L106.5,646.4 L106.0,646.5 L105.5,646.2 L105.0,646.1 L104.5,646.1 L104.0,645.5 L103.5,646.0 L103.0,646.7 L102.5,646.3 L102.0,647.1 L101.5,646.8 L101.0,646.3 L100.5,646.8 L100.0,646.9 L99.5,647.3 L99.0,647.0 L98.5,648.9 L98.0,646.8 L97.5,647.2 L97.0,647.5 L96.5,647.1 L96.0,647.0 L95.5,647.5 L95.0,646.8 L94.5,646.9 L94.0,646.8 L93.5,647.4 L93.0,647.1 L92.5,647.1 L92.0,647.1 L91.5,647.1 L91.0,647.3 L90.5,646.9 L90.0,646.9 L89.5,647.1 L89.0,647.2 L88.5,647.0 L88.0,647.1 L87.5,646.9 L87.0,647.2 L86.5,647.5 L86.0,647.9Z" fill="#dddfe3"/></g>
<path d="M247.8,603.5 L248.3,603.1 L248.8,604.3 L249.3,604.0 L249.8,604.6 L250.3,604.6 L250.8,603.4 L251.3,603.8 L251.8,603.8 L252.3,603.8 L252.8,603.8 L253.3,603.6 L253.8,603.4 L254.3,604.0 L254.8,603.6 L255.3,603.8 L255.8,601.9 L256.3,603.6 L256.8,604.0 L257.3,603.5 L257.8,603.6 L258.3,604.3 L258.8,602.2 L259.3,604.1 L259.8,604.2 L260.3,604.4 L260.8,604.7 L261.3,605.0 L261.8,604.6 L262.3,604.8 L262.8,604.8 L263.3,605.1 L263.8,605.2 L264.3,604.9 L264.8,605.4 L265.3,605.5 L265.8,605.5 L266.3,605.4 L266.8,605.7 L267.3,605.6 L267.8,605.3 L268.3,605.8 L268.8,605.5 L269.3,605.5 L269.8,605.0 L270.3,605.0 L270.8,604.8 L271.3,605.0 L271.8,605.0 L272.3,605.1 L272.8,604.8 L273.3,604.3 L273.8,605.2 L274.3,605.4 L274.8,605.4 L275.3,605.6 L275.8,605.6 L276.3,605.5 L276.8,605.6 L277.3,605.1 L277.8,605.6 L278.3,605.4 L278.8,605.1 L279.3,604.6 L279.8,604.1 L280.3,604.2 L280.8,603.6 L281.3,602.1 L281.8,603.9 L282.3,603.0 L282.8,602.9 L283.3,603.7 L283.8,603.5 L284.3,602.0 L284.8,603.4 L285.3,603.3 L285.8,601.5 L286.3,603.6 L286.8,603.6 L287.3,603.7 L287.8,604.3 L288.3,604.4 L288.8,605.0 L289.3,603.0 L289.8,604.1 L290.3,604.2 L290.8,603.6 L291.3,603.9 L291.8,604.2 L292.3,603.8 L292.8,604.4 L293.3,604.3 L293.8,603.3 L294.3,603.7 L294.8,603.7 L295.3,604.2 L295.8,604.1 L296.3,603.8 L296.8,602.5 L297.3,604.1 L297.8,603.5 L298.3,603.7 L298.8,604.1 L299.3,604.2 L299.8,603.0 L300.3,603.9 L300.8,605.0 L301.3,604.9 L301.8,605.1 L302.3,605.2 L302.8,605.4 L303.3,605.4 L303.8,605.7 L304.3,605.7 L304.8,605.5 L305.3,605.6 L305.8,605.3 L306.3,605.2 L306.8,604.6 L307.3,603.5 L307.8,604.1 L308.3,604.6 L308.8,605.4 L309.3,604.6 L309.8,604.6 L310.3,604.9 L310.8,605.6 L311.3,605.5 L311.8,605.7 L312.3,604.9 L312.8,605.5 L313.3,605.4 L313.8,605.6 L314.3,605.4 L314.8,605.5 L315.3,605.1 L315.8,605.6 L316.3,605.5 L316.8,605.3 L317.3,605.2 L317.8,605.0 L318.3,604.7 L318.8,604.8 L319.3,605.0 L319.8,603.9 L320.3,604.8 L320.8,604.8 L321.3,604.7 L321.8,604.8 L322.3,605.1 L322.8,604.4 L323.3,604.8 L323.8,604.7 L324.3,604.9 L324.8,603.4 L325.3,604.9 L325.8,605.5 L326.3,606.3 L326.8,606.4 L327.3,606.5 L327.3,607.7 L326.8,607.7 L326.3,608.0 L325.8,608.7 L325.3,609.1 L324.8,609.4 L324.3,609.1 L323.8,609.5 L323.3,609.2 L322.8,609.3 L322.3,609.4 L321.8,609.3 L321.3,609.5 L320.8,609.9 L320.3,609.3 L319.8,609.6 L319.3,609.7 L318.8,608.9 L318.3,609.3 L317.8,609.7 L317.3,609.0 L316.8,609.0 L316.3,608.9 L315.8,608.7 L315.3,609.0 L314.8,608.7 L314.3,609.3 L313.8,608.7 L313.3,608.4 L312.8,608.7 L312.3,608.6 L311.8,609.6 L311.3,608.6 L310.8,608.7 L310.3,608.8 L309.8,609.4 L309.3,609.3 L308.8,609.1 L308.3,609.1 L307.8,610.6 L307.3,610.0 L306.8,609.7 L306.3,609.3 L305.8,609.0 L305.3,608.8 L304.8,608.7 L304.3,608.5 L303.8,609.0 L303.3,608.6 L302.8,608.8 L302.3,608.9 L301.8,608.6 L301.3,609.3 L300.8,609.2 L300.3,609.7 L299.8,611.0 L299.3,610.4 L298.8,610.5 L298.3,610.5 L297.8,610.3 L297.3,610.0 L296.8,610.0 L296.3,610.3 L295.8,610.5 L295.3,610.4 L294.8,610.5 L294.3,612.1 L293.8,611.8 L293.3,610.2 L292.8,610.0 L292.3,610.5 L291.8,610.0 L291.3,609.9 L290.8,610.0 L290.3,610.4 L289.8,610.8 L289.3,609.8 L288.8,609.8 L288.3,609.9 L287.8,610.4 L287.3,610.1 L286.8,610.1 L286.3,610.9 L285.8,611.0 L285.3,610.8 L284.8,611.0 L284.3,610.7 L283.8,611.9 L283.3,610.0 L282.8,611.0 L282.3,611.0 L281.8,611.7 L281.3,610.5 L280.8,610.4 L280.3,610.2 L279.8,609.7 L279.3,609.4 L278.8,609.4 L278.3,609.2 L277.8,608.9 L277.3,609.0 L276.8,608.4 L276.3,608.9 L275.8,608.7 L275.3,608.6 L274.8,608.7 L274.3,609.1 L273.8,609.5 L273.3,609.6 L272.8,609.5 L272.3,609.7 L271.8,609.6 L271.3,609.3 L270.8,609.4 L270.3,609.1 L269.8,609.0 L269.3,608.6 L268.8,608.6 L268.3,608.5 L267.8,608.5 L267.3,608.7 L266.8,608.8 L266.3,609.0 L265.8,608.9 L265.3,608.7 L264.8,609.0 L264.3,609.0 L263.8,609.1 L263.3,610.1 L262.8,609.5 L262.3,609.7 L261.8,609.2 L261.3,610.1 L260.8,609.8 L260.3,610.3 L259.8,610.9 L259.3,610.2 L258.8,610.0 L258.3,610.0 L257.8,610.3 L257.3,610.8 L256.8,610.8 L256.3,611.8 L255.8,610.3 L255.3,611.1 L254.8,611.1 L254.3,610.5 L253.8,612.6 L253.3,611.6 L252.8,610.2 L252.3,610.1 L251.8,609.6 L251.3,609.8 L250.8,609.6 L250.3,609.4 L249.8,611.1 L249.3,609.8 L248.8,610.4 L248.3,611.4 L247.8,610.4Z" fill="#f1d3b6"/><path d="M247.8,641.1 L248.3,641.2 L248.8,641.6 L249.3,642.1 L249.8,641.8 L250.3,641.7 L250.8,641.6 L251.3,641.9 L251.8,641.3 L252.3,642.1 L252.8,641.6 L253.3,641.8 L253.8,642.2 L254.3,641.6 L254.8,641.7 L255.3,642.0 L255.8,642.0 L256.3,642.3 L256.8,642.6 L257.3,642.3 L257.8,642.5 L258.3,642.0 L258.8,641.9 L259.3,642.1 L259.8,642.2 L260.3,642.2 L260.8,642.7 L261.3,642.3 L261.8,642.6 L262.3,642.6 L262.8,642.6 L263.3,642.4 L263.8,642.5 L264.3,642.8 L264.8,642.4 L265.3,642.8 L265.8,642.6 L266.3,642.6 L266.8,642.9 L267.3,642.5 L267.8,642.4 L268.3,641.5 L268.8,642.8 L269.3,642.4 L269.8,642.5 L270.3,642.3 L270.8,642.5 L271.3,642.7 L271.8,643.3 L272.3,643.2 L272.8,642.7 L273.3,642.6 L273.8,642.0 L274.3,642.5 L274.8,642.2 L275.3,642.6 L275.8,642.5 L276.3,643.0 L276.8,643.3 L277.3,643.0 L277.8,643.0 L278.3,642.8 L278.8,642.6 L279.3,642.4 L279.8,641.7 L280.3,642.2 L280.8,642.1 L281.3,642.4 L281.8,642.3 L282.3,642.3 L282.8,642.0 L283.3,641.5 L283.8,641.8 L284.3,641.6 L284.8,641.8 L285.3,641.6 L285.8,641.3 L286.3,641.7 L286.8,642.1 L287.3,642.3 L287.8,642.2 L288.3,642.0 L288.8,641.7 L289.3,641.7 L289.8,641.6 L290.3,640.3 L290.8,641.4 L291.3,641.6 L291.8,641.5 L292.3,641.1 L292.8,641.8 L293.3,641.5 L293.8,641.7 L294.3,641.6 L294.8,641.6 L295.3,641.9 L295.8,641.9 L296.3,642.2 L296.8,642.3 L297.3,641.6 L297.8,640.8 L298.3,641.8 L298.8,641.4 L299.3,641.4 L299.8,641.3 L300.3,641.8 L300.8,641.6 L301.3,641.3 L301.8,641.2 L302.3,641.6 L302.8,640.5 L303.3,640.7 L303.8,641.3 L304.3,641.8 L304.8,641.6 L305.3,641.7 L305.8,641.4 L306.3,641.9 L306.8,642.1 L307.3,641.5 L307.8,641.2 L308.3,641.4 L308.8,641.5 L309.3,642.1 L309.8,641.4 L310.3,641.5 L310.8,641.4 L311.3,642.0 L311.8,641.4 L312.3,641.6 L312.8,642.0 L313.3,641.9 L313.8,641.5 L314.3,641.8 L314.8,642.0 L315.3,641.4 L315.8,641.8 L316.3,642.4 L316.8,642.0 L317.3,641.9 L317.8,641.9 L318.3,641.8 L318.8,641.3 L319.3,641.7 L319.8,641.1 L320.3,639.9 L320.8,641.6 L321.3,641.5 L321.8,641.5 L322.3,641.8 L322.8,641.4 L323.3,640.5 L323.8,641.6 L324.3,642.2 L324.8,642.4 L325.3,641.9 L325.8,642.8 L326.3,643.2 L326.8,643.7 L327.3,643.5 L327.3,645.4 L326.8,645.5 L326.3,645.7 L325.8,646.0 L325.3,646.4 L324.8,646.8 L324.3,646.7 L323.8,647.1 L323.3,647.2 L322.8,647.6 L322.3,647.2 L321.8,647.7 L321.3,647.3 L320.8,647.7 L320.3,647.4 L319.8,647.3 L319.3,647.8 L318.8,647.2 L318.3,647.1 L317.8,647.6 L317.3,646.7 L316.8,647.1 L316.3,646.8 L315.8,646.7 L315.3,647.4 L314.8,647.2 L314.3,647.1 L313.8,647.5 L313.3,646.8 L312.8,647.1 L312.3,647.3 L311.8,647.6 L311.3,647.0 L310.8,647.2 L310.3,647.3 L309.8,647.4 L309.3,646.9 L308.8,647.6 L308.3,647.0 L307.8,646.5 L307.3,647.2 L306.8,647.0 L306.3,647.3 L305.8,647.2 L305.3,647.9 L304.8,647.7 L304.3,647.9 L303.8,647.8 L303.3,646.9 L302.8,647.2 L302.3,647.7 L301.8,647.3 L301.3,647.4 L300.8,647.8 L300.3,648.5 L299.8,647.5 L299.3,647.1 L298.8,647.5 L298.3,647.1 L297.8,647.1 L297.3,647.5 L296.8,646.6 L296.3,647.0 L295.8,647.0 L295.3,647.5 L294.8,647.2 L294.3,647.1 L293.8,647.5 L293.3,647.2 L292.8,647.1 L292.3,647.3 L291.8,647.6 L291.3,647.1 L290.8,647.1 L290.3,647.2 L289.8,648.2 L289.3,646.6 L288.8,647.1 L288.3,647.8 L287.8,646.6 L287.3,646.5 L286.8,647.2 L286.3,647.0 L285.8,646.9 L285.3,647.4 L284.8,647.2 L284.3,647.0 L283.8,647.7 L283.3,647.5 L282.8,647.2 L282.3,647.1 L281.8,646.9 L281.3,646.5 L280.8,646.5 L280.3,647.1 L279.8,646.8 L279.3,646.5 L278.8,646.4 L278.3,646.3 L277.8,645.8 L277.3,645.8 L276.8,645.8 L276.3,645.8 L275.8,646.2 L275.3,646.0 L274.8,646.4 L274.3,646.3 L273.8,646.2 L273.3,646.0 L272.8,646.0 L272.3,645.9 L271.8,645.9 L271.3,646.1 L270.8,646.5 L270.3,646.2 L269.8,646.2 L269.3,646.2 L268.8,646.4 L268.3,646.2 L267.8,646.5 L267.3,646.4 L266.8,645.9 L266.3,646.4 L265.8,646.3 L265.3,645.9 L264.8,646.1 L264.3,646.1 L263.8,646.2 L263.3,646.6 L262.8,646.7 L262.3,646.7 L261.8,646.3 L261.3,646.4 L260.8,646.5 L260.3,646.6 L259.8,646.8 L259.3,646.8 L258.8,646.8 L258.3,646.9 L257.8,646.5 L257.3,647.4 L256.8,646.8 L256.3,646.8 L255.8,647.9 L255.3,646.8 L254.8,647.1 L254.3,647.1 L253.8,646.7 L253.3,647.9 L252.8,646.7 L252.3,647.1 L251.8,646.8 L251.3,647.6 L250.8,647.4 L250.3,647.7 L249.8,647.4 L249.3,646.7 L248.8,647.5 L248.3,648.3 L247.8,648.0Z" fill="#f1d3b6"/>
<path d="M435.0,602.3 L435.5,600.8 L436.0,603.3 L436.5,603.9 L437.0,604.2 L437.5,604.5 L438.0,604.7 L438.5,605.0 L439.0,604.9 L439.5,604.2 L440.0,604.5 L440.5,604.8 L441.0,604.4 L441.5,604.3 L442.0,604.1 L442.5,605.0 L443.0,604.7 L443.5,605.3 L444.0,605.3 L444.5,605.3 L445.0,605.1 L445.5,605.4 L446.0,605.4 L446.5,604.9 L447.0,604.8 L447.5,605.0 L448.0,605.2 L448.5,605.4 L449.0,604.9 L449.5,605.4 L450.0,604.9 L450.5,604.8 L451.0,604.6 L451.5,604.9 L452.0,605.1 L452.5,605.3 L453.0,605.2 L453.5,604.9 L454.0,604.7 L454.5,604.2 L455.0,604.4 L455.5,604.0 L456.0,604.4 L456.5,603.9 L457.0,603.9 L457.5,602.7 L458.0,603.1 L458.5,603.2 L459.0,604.0 L459.5,604.0 L460.0,603.2 L460.5,604.3 L461.0,603.3 L461.5,603.8 L462.0,603.0 L462.5,603.4 L463.0,603.8 L463.5,602.2 L464.0,603.4 L464.5,603.8 L465.0,604.6 L465.5,604.7 L466.0,604.9 L466.5,604.9 L467.0,604.6 L467.5,604.7 L468.0,604.7 L468.5,604.9 L469.0,604.8 L469.5,603.5 L470.0,605.0 L470.5,604.9 L471.0,604.4 L471.5,603.5 L472.0,603.7 L472.5,602.7 L473.0,603.4 L473.5,603.8 L474.0,604.3 L474.5,604.1 L475.0,604.1 L475.5,603.6 L476.0,603.7 L476.5,603.6 L477.0,603.8 L477.5,603.5 L478.0,603.0 L478.5,603.7 L479.0,603.5 L479.5,603.0 L480.0,603.8 L480.5,603.4 L481.0,603.2 L481.5,603.4 L482.0,603.0 L482.5,603.5 L483.0,604.0 L483.5,602.6 L484.0,603.2 L484.5,603.9 L485.0,604.3 L485.5,604.4 L486.0,604.3 L486.5,603.5 L487.0,603.7 L487.5,603.8 L488.0,603.3 L488.5,604.3 L489.0,604.6 L489.5,604.1 L490.0,604.1 L490.5,602.8 L491.0,604.1 L491.5,604.5 L492.0,604.0 L492.5,604.9 L493.0,604.5 L493.5,604.6 L494.0,604.0 L494.5,603.9 L495.0,604.8 L495.5,605.1 L496.0,603.6 L496.5,604.5 L497.0,604.4 L497.5,603.9 L498.0,604.7 L498.5,604.5 L499.0,604.0 L499.5,604.7 L500.0,604.9 L500.5,604.9 L501.0,605.1 L501.5,605.6 L502.0,605.5 L502.5,605.2 L503.0,605.4 L503.5,605.7 L504.0,605.5 L504.5,605.6 L505.0,605.6 L505.5,605.0 L506.0,604.7 L506.5,603.3 L507.0,604.5 L507.5,604.8 L508.0,604.1 L508.5,604.5 L509.0,603.9 L509.5,604.9 L510.0,604.8 L510.5,604.9 L511.0,604.3 L511.5,604.9 L512.0,604.9 L512.5,605.3 L513.0,605.3 L513.5,605.9 L514.0,606.3 L514.5,606.5 L515.0,606.3 L515.0,607.8 L514.5,607.8 L514.0,608.2 L513.5,608.2 L513.0,608.7 L512.5,608.9 L512.0,609.1 L511.5,609.8 L511.0,609.9 L510.5,609.2 L510.0,609.4 L509.5,609.6 L509.0,609.9 L508.5,610.1 L508.0,609.2 L507.5,609.3 L507.0,609.5 L506.5,609.5 L506.0,609.5 L505.5,609.4 L505.0,609.0 L504.5,608.7 L504.0,608.9 L503.5,608.7 L503.0,608.9 L502.5,608.6 L502.0,608.4 L501.5,609.3 L501.0,609.2 L500.5,609.1 L500.0,609.3 L499.5,609.6 L499.0,610.1 L498.5,609.9 L498.0,610.0 L497.5,609.9 L497.0,610.0 L496.5,609.5 L496.0,609.9 L495.5,609.7 L495.0,609.7 L494.5,611.0 L494.0,609.5 L493.5,610.3 L493.0,609.5 L492.5,609.9 L492.0,610.2 L491.5,610.1 L491.0,609.9 L490.5,610.0 L490.0,610.0 L489.5,610.3 L489.0,609.6 L488.5,611.2 L488.0,610.4 L487.5,611.1 L487.0,609.9 L486.5,610.9 L486.0,610.5 L485.5,610.2 L485.0,610.4 L484.5,610.7 L484.0,611.1 L483.5,610.3 L483.0,610.6 L482.5,610.9 L482.0,610.8 L481.5,611.0 L481.0,610.5 L480.5,610.2 L480.0,610.6 L479.5,610.6 L479.0,611.0 L478.5,610.5 L478.0,610.6 L477.5,610.2 L477.0,610.5 L476.5,610.7 L476.0,610.7 L475.5,610.3 L475.0,609.5 L474.5,610.5 L474.0,610.1 L473.5,610.1 L473.0,610.7 L472.5,610.9 L472.0,610.1 L471.5,610.0 L471.0,609.8 L470.5,609.6 L470.0,609.5 L469.5,610.7 L469.0,609.1 L468.5,609.4 L468.0,609.6 L467.5,610.0 L467.0,609.5 L466.5,609.5 L466.0,609.6 L465.5,609.8 L465.0,609.7 L464.5,610.0 L464.0,610.1 L463.5,611.2 L463.0,611.1 L462.5,611.3 L462.0,610.7 L461.5,610.0 L461.0,610.6 L460.5,609.9 L460.0,610.3 L459.5,610.5 L459.0,610.0 L458.5,610.9 L458.0,610.9 L457.5,610.1 L457.0,610.5 L456.5,610.2 L456.0,610.0 L455.5,609.9 L455.0,610.1 L454.5,610.2 L454.0,609.9 L453.5,609.6 L453.0,609.1 L452.5,608.8 L452.0,609.3 L451.5,609.8 L451.0,609.8 L450.5,609.1 L450.0,609.2 L449.5,608.8 L449.0,609.1 L448.5,609.0 L448.0,608.9 L447.5,609.1 L447.0,609.3 L446.5,609.2 L446.0,609.0 L445.5,609.0 L445.0,608.8 L444.5,608.7 L444.0,609.0 L443.5,608.9 L443.0,609.1 L442.5,609.1 L442.0,609.5 L441.5,609.8 L441.0,610.3 L440.5,611.1 L440.0,609.5 L439.5,609.5 L439.0,609.0 L438.5,609.6 L438.0,609.4 L437.5,610.4 L437.0,610.0 L436.5,610.6 L436.0,611.2 L435.5,612.4 L435.0,611.5Z" fill="#f1d3b6"/><path d="M435.0,641.2 L435.5,640.9 L436.0,641.3 L436.5,641.8 L437.0,641.8 L437.5,641.8 L438.0,641.2 L438.5,641.8 L439.0,641.6 L439.5,641.3 L440.0,641.9 L440.5,641.2 L441.0,642.1 L441.5,641.8 L442.0,642.1 L442.5,642.1 L443.0,640.2 L443.5,641.8 L444.0,642.1 L444.5,641.6 L445.0,642.1 L445.5,641.5 L446.0,642.0 L446.5,641.6 L447.0,641.8 L447.5,641.4 L448.0,642.0 L448.5,641.6 L449.0,641.8 L449.5,642.0 L450.0,642.1 L450.5,642.4 L451.0,642.2 L451.5,641.3 L452.0,642.2 L452.5,642.4 L453.0,642.4 L453.5,641.9 L454.0,641.9 L454.5,641.1 L455.0,642.4 L455.5,641.5 L456.0,641.6 L456.5,642.1 L457.0,641.7 L457.5,642.3 L458.0,642.2 L458.5,642.1 L459.0,641.9 L459.5,641.7 L460.0,642.3 L460.5,641.0 L461.0,641.9 L461.5,642.5 L462.0,642.5 L462.5,641.9 L463.0,642.6 L463.5,642.4 L464.0,642.9 L464.5,642.7 L465.0,642.9 L465.5,642.6 L466.0,642.3 L466.5,642.3 L467.0,642.3 L467.5,641.8 L468.0,641.5 L468.5,641.7 L469.0,641.5 L469.5,641.7 L470.0,642.4 L470.5,642.7 L471.0,642.4 L471.5,642.7 L472.0,642.2 L472.5,642.2 L473.0,642.8 L473.5,642.5 L474.0,642.2 L474.5,642.0 L475.0,641.9 L475.5,641.7 L476.0,641.9 L476.5,641.2 L477.0,641.4 L477.5,641.0 L478.0,641.7 L478.5,641.5 L479.0,641.4 L479.5,639.9 L480.0,641.4 L480.5,642.1 L481.0,640.7 L481.5,642.0 L482.0,642.4 L482.5,642.7 L483.0,642.6 L483.5,642.4 L484.0,641.0 L484.5,642.1 L485.0,642.7 L485.5,642.4 L486.0,642.6 L486.5,642.3 L487.0,642.9 L487.5,642.2 L488.0,641.6 L488.5,642.6 L489.0,643.0 L489.5,642.9 L490.0,643.1 L490.5,643.4 L491.0,642.6 L491.5,643.0 L492.0,642.8 L492.5,642.7 L493.0,643.1 L493.5,643.1 L494.0,643.1 L494.5,643.3 L495.0,643.4 L495.5,643.3 L496.0,643.0 L496.5,643.0 L497.0,643.3 L497.5,642.4 L498.0,643.4 L498.5,643.2 L499.0,643.2 L499.5,643.1 L500.0,643.4 L500.5,643.1 L501.0,643.1 L501.5,643.0 L502.0,643.0 L502.5,642.5 L503.0,641.7 L503.5,642.6 L504.0,642.4 L504.5,642.5 L505.0,642.8 L505.5,643.0 L506.0,643.2 L506.5,643.3 L507.0,642.7 L507.5,643.2 L508.0,642.9 L508.5,641.6 L509.0,642.7 L509.5,642.7 L510.0,642.5 L510.5,641.8 L511.0,641.7 L511.5,640.4 L512.0,642.0 L512.5,642.3 L513.0,641.7 L513.5,642.4 L514.0,643.1 L514.5,643.6 L515.0,643.8 L515.0,645.3 L514.5,645.3 L514.0,645.8 L513.5,646.1 L513.0,647.1 L512.5,647.3 L512.0,648.0 L511.5,647.4 L511.0,646.9 L510.5,646.7 L510.0,646.6 L509.5,646.3 L509.0,647.0 L508.5,646.3 L508.0,646.9 L507.5,646.1 L507.0,646.7 L506.5,645.7 L506.0,645.7 L505.5,645.8 L505.0,646.1 L504.5,646.6 L504.0,646.6 L503.5,646.4 L503.0,646.3 L502.5,646.2 L502.0,646.2 L501.5,646.8 L501.0,645.7 L500.5,645.7 L500.0,645.7 L499.5,645.7 L499.0,645.7 L498.5,645.8 L498.0,645.7 L497.5,645.8 L497.0,645.9 L496.5,646.2 L496.0,645.8 L495.5,645.8 L495.0,645.5 L494.5,645.8 L494.0,645.8 L493.5,645.9 L493.0,645.9 L492.5,646.3 L492.0,645.8 L491.5,645.9 L491.0,646.0 L490.5,645.7 L490.0,645.7 L489.5,646.5 L489.0,646.1 L488.5,646.5 L488.0,646.7 L487.5,646.3 L487.0,646.3 L486.5,646.4 L486.0,646.3 L485.5,646.5 L485.0,646.5 L484.5,646.9 L484.0,646.8 L483.5,646.6 L483.0,646.6 L482.5,646.6 L482.0,647.5 L481.5,647.0 L481.0,647.1 L480.5,647.1 L480.0,647.3 L479.5,647.5 L479.0,647.4 L478.5,647.6 L478.0,647.6 L477.5,647.0 L477.0,647.2 L476.5,647.1 L476.0,647.4 L475.5,647.3 L475.0,647.1 L474.5,646.9 L474.0,646.5 L473.5,646.5 L473.0,646.3 L472.5,646.5 L472.0,646.6 L471.5,646.4 L471.0,646.3 L470.5,646.4 L470.0,647.1 L469.5,647.0 L469.0,646.9 L468.5,647.4 L468.0,647.3 L467.5,647.3 L467.0,646.5 L466.5,646.9 L466.0,646.4 L465.5,646.1 L465.0,646.1 L464.5,646.2 L464.0,646.5 L463.5,646.8 L463.0,646.7 L462.5,646.6 L462.0,646.6 L461.5,647.5 L461.0,646.7 L460.5,647.1 L460.0,646.9 L459.5,647.0 L459.0,646.7 L458.5,646.8 L458.0,646.8 L457.5,646.9 L457.0,646.9 L456.5,647.3 L456.0,647.0 L455.5,648.4 L455.0,646.7 L454.5,647.5 L454.0,647.3 L453.5,646.6 L453.0,647.0 L452.5,646.9 L452.0,647.2 L451.5,646.5 L451.0,646.8 L450.5,646.7 L450.0,646.9 L449.5,647.2 L449.0,647.1 L448.5,647.2 L448.0,647.3 L447.5,647.4 L447.0,647.7 L446.5,647.1 L446.0,647.4 L445.5,647.1 L445.0,647.1 L444.5,647.1 L444.0,646.9 L443.5,647.2 L443.0,647.7 L442.5,646.8 L442.0,646.8 L441.5,648.7 L441.0,647.0 L440.5,647.0 L440.0,647.2 L439.5,647.5 L439.0,647.2 L438.5,647.5 L438.0,647.4 L437.5,647.5 L437.0,648.7 L436.5,647.2 L436.0,647.6 L435.5,647.8 L435.0,648.4Z" fill="#f1d3b6"/>
<path d="M622.0,602.9 L622.5,602.8 L623.0,604.5 L623.5,603.9 L624.0,603.8 L624.5,604.3 L625.0,603.5 L625.5,604.1 L626.0,604.1 L626.5,604.8 L627.0,605.0 L627.5,604.5 L628.0,603.7 L628.5,604.1 L629.0,604.5 L629.5,603.5 L630.0,603.6 L630.5,602.9 L631.0,603.0 L631.5,603.5 L632.0,604.2 L632.5,604.0 L633.0,602.9 L633.5,603.4 L634.0,603.7 L634.5,604.5 L635.0,603.8 L635.5,604.1 L636.0,604.3 L636.5,604.0 L637.0,603.3 L637.5,603.5 L638.0,603.5 L638.5,603.2 L639.0,603.7 L639.5,603.8 L640.0,602.8 L640.5,604.3 L641.0,604.5 L641.5,604.4 L642.0,603.7 L642.5,604.8 L643.0,604.3 L643.5,604.4 L644.0,604.3 L644.5,604.7 L645.0,604.1 L645.5,604.8 L646.0,604.7 L646.5,604.6 L647.0,605.2 L647.5,605.3 L648.0,605.0 L648.5,604.5 L649.0,604.5 L649.5,604.6 L650.0,604.1 L650.5,603.4 L651.0,604.6 L651.5,603.9 L652.0,603.3 L652.5,604.1 L653.0,603.6 L653.5,603.6 L654.0,603.5 L654.5,604.1 L655.0,604.0 L655.5,602.9 L656.0,602.9 L656.5,603.6 L657.0,604.2 L657.5,603.0 L658.0,604.2 L658.5,603.6 L659.0,604.6 L659.5,604.5 L660.0,602.9 L660.5,604.3 L661.0,603.1 L661.5,603.3 L662.0,602.5 L662.5,603.8 L663.0,603.4 L663.5,604.3 L664.0,603.4 L664.5,603.7 L665.0,603.2 L665.5,603.4 L666.0,601.9 L666.5,603.7 L667.0,603.5 L667.5,602.9 L668.0,604.0 L668.5,603.8 L669.0,604.3 L669.5,604.0 L670.0,604.5 L670.5,604.0 L671.0,605.0 L671.5,605.4 L672.0,605.3 L672.5,605.9 L673.0,606.5 L673.5,606.4 L674.0,606.4 L674.0,607.9 L673.5,607.9 L673.0,607.8 L672.5,608.4 L672.0,609.2 L671.5,609.1 L671.0,609.7 L670.5,610.1 L670.0,610.1 L669.5,610.1 L669.0,610.7 L668.5,610.8 L668.0,609.7 L667.5,609.8 L667.0,610.6 L666.5,610.4 L666.0,610.6 L665.5,610.4 L665.0,611.3 L664.5,611.0 L664.0,610.1 L663.5,610.3 L663.0,610.6 L662.5,612.2 L662.0,611.1 L661.5,610.8 L661.0,610.2 L660.5,610.3 L660.0,610.2 L659.5,610.1 L659.0,609.7 L658.5,610.3 L658.0,610.5 L657.5,611.3 L657.0,610.2 L656.5,610.3 L656.0,611.0 L655.5,610.7 L655.0,610.6 L654.5,610.8 L654.0,610.8 L653.5,610.5 L653.0,610.0 L652.5,609.8 L652.0,610.4 L651.5,610.0 L651.0,610.1 L650.5,610.5 L650.0,609.3 L649.5,610.0 L649.0,609.7 L648.5,609.8 L648.0,610.3 L647.5,609.1 L647.0,610.3 L646.5,609.7 L646.0,609.5 L645.5,609.2 L645.0,610.0 L644.5,609.9 L644.0,610.6 L643.5,609.6 L643.0,609.7 L642.5,609.5 L642.0,609.8 L641.5,609.3 L641.0,610.3 L640.5,611.7 L640.0,610.6 L639.5,610.4 L639.0,610.1 L638.5,610.7 L638.0,610.6 L637.5,610.6 L637.0,611.0 L636.5,610.3 L636.0,609.5 L635.5,610.2 L635.0,610.3 L634.5,610.0 L634.0,610.5 L633.5,610.4 L633.0,610.3 L632.5,609.9 L632.0,610.8 L631.5,611.1 L631.0,611.0 L630.5,612.3 L630.0,610.4 L629.5,610.3 L629.0,611.8 L628.5,610.5 L628.0,610.5 L627.5,609.9 L627.0,609.3 L626.5,609.4 L626.0,610.5 L625.5,610.0 L625.0,609.9 L624.5,610.7 L624.0,610.2 L623.5,610.2 L623.0,610.3 L622.5,611.2 L622.0,611.1Z" fill="#f1d3b6"/><path d="M622.0,641.0 L622.5,640.8 L623.0,641.6 L623.5,642.2 L624.0,641.6 L624.5,641.7 L625.0,641.4 L625.5,641.7 L626.0,641.4 L626.5,641.8 L627.0,641.7 L627.5,640.2 L628.0,641.0 L628.5,641.5 L629.0,641.6 L629.5,642.1 L630.0,641.7 L630.5,641.3 L631.0,642.0 L631.5,642.2 L632.0,642.4 L632.5,642.5 L633.0,642.2 L633.5,641.1 L634.0,642.0 L634.5,641.5 L635.0,642.2 L635.5,642.1 L636.0,641.7 L636.5,641.6 L637.0,641.9 L637.5,641.2 L638.0,641.6 L638.5,641.4 L639.0,641.1 L639.5,641.3 L640.0,640.7 L640.5,640.1 L641.0,642.0 L641.5,641.9 L642.0,642.4 L642.5,641.8 L643.0,641.0 L643.5,642.2 L644.0,642.0 L644.5,641.5 L645.0,642.0 L645.5,641.5 L646.0,641.2 L646.5,641.7 L647.0,641.4 L647.5,641.6 L648.0,642.2 L648.5,641.7 L649.0,642.5 L649.5,642.3 L650.0,642.1 L650.5,642.6 L651.0,642.3 L651.5,642.5 L652.0,642.1 L652.5,642.0 L653.0,642.2 L653.5,642.8 L654.0,642.7 L654.5,642.3 L655.0,642.3 L655.5,642.5 L656.0,642.8 L656.5,642.7 L657.0,642.5 L657.5,642.9 L658.0,642.5 L658.5,642.1 L659.0,643.1 L659.5,643.0 L660.0,643.2 L660.5,643.0 L661.0,642.5 L661.5,642.6 L662.0,641.8 L662.5,642.8 L663.0,642.2 L663.5,642.5 L664.0,642.4 L664.5,642.4 L665.0,642.1 L665.5,642.3 L666.0,641.9 L666.5,642.0 L667.0,641.7 L667.5,641.4 L668.0,641.7 L668.5,641.1 L669.0,641.3 L669.5,641.2 L670.0,641.9 L670.5,642.1 L671.0,641.7 L671.5,641.8 L672.0,642.0 L672.5,642.9 L673.0,643.4 L673.5,643.4 L674.0,643.5 L674.0,645.3 L673.5,645.6 L673.0,645.7 L672.5,647.0 L672.0,647.2 L671.5,647.8 L671.0,647.2 L670.5,646.7 L670.0,647.5 L669.5,647.2 L669.0,648.6 L668.5,647.5 L668.0,647.4 L667.5,647.5 L667.0,647.3 L666.5,646.8 L666.0,646.7 L665.5,646.6 L665.0,646.9 L664.5,646.4 L664.0,646.3 L663.5,646.6 L663.0,646.5 L662.5,646.2 L662.0,646.3 L661.5,646.0 L661.0,646.2 L660.5,645.9 L660.0,646.5 L659.5,646.0 L659.0,645.7 L658.5,645.9 L658.0,646.2 L657.5,646.4 L657.0,646.2 L656.5,646.2 L656.0,646.3 L655.5,646.6 L655.0,646.9 L654.5,646.3 L654.0,646.2 L653.5,646.6 L653.0,646.3 L652.5,646.8 L652.0,646.8 L651.5,646.3 L651.0,647.0 L650.5,646.3 L650.0,646.7 L649.5,646.7 L649.0,646.8 L648.5,646.8 L648.0,646.7 L647.5,647.2 L647.0,647.8 L646.5,647.1 L646.0,647.3 L645.5,647.6 L645.0,647.4 L644.5,646.9 L644.0,646.9 L643.5,646.7 L643.0,646.9 L642.5,647.2 L642.0,646.4 L641.5,647.0 L641.0,647.1 L640.5,647.3 L640.0,647.2 L639.5,647.5 L639.0,647.6 L638.5,648.2 L638.0,647.1 L637.5,647.7 L637.0,647.3 L636.5,647.2 L636.0,646.7 L635.5,646.8 L635.0,646.9 L634.5,647.5 L634.0,646.8 L633.5,646.8 L633.0,646.9 L632.5,646.4 L632.0,647.3 L631.5,647.2 L631.0,648.0 L630.5,647.5 L630.0,647.3 L629.5,646.8 L629.0,646.7 L628.5,647.0 L628.0,647.0 L627.5,647.7 L627.0,648.4 L626.5,647.1 L626.0,647.2 L625.5,647.5 L625.0,647.8 L624.5,647.1 L624.0,647.6 L623.5,647.1 L623.0,646.8 L622.5,647.3 L622.0,648.4Z" fill="#f1d3b6"/>
<path d="M731.6,603.4 L732.1,602.9 L732.6,603.4 L733.1,604.3 L733.6,604.4 L734.1,604.0 L734.6,604.3 L735.1,604.2 L735.6,603.3 L736.1,602.9 L736.6,603.3 L737.1,603.4 L737.6,603.2 L738.1,603.3 L738.6,603.2 L739.1,603.1 L739.6,603.4 L740.1,603.8 L740.6,603.5 L741.1,603.2 L741.6,603.7 L742.1,603.7 L742.6,601.8 L743.1,603.3 L743.6,603.6 L744.1,603.2 L744.6,603.5 L745.1,602.8 L745.6,603.9 L746.1,603.4 L746.6,603.5 L747.1,603.0 L747.6,603.0 L748.1,603.2 L748.6,603.5 L749.1,603.7 L749.6,603.8 L750.1,603.4 L750.6,604.1 L751.1,603.7 L751.6,602.5 L752.1,604.4 L752.6,603.4 L753.1,604.1 L753.6,604.6 L754.1,604.4 L754.6,604.7 L755.1,605.4 L755.6,604.7 L756.1,604.7 L756.6,604.4 L757.1,603.4 L757.6,603.9 L758.1,603.7 L758.6,604.2 L759.1,603.8 L759.6,604.2 L760.1,604.2 L760.6,603.1 L761.1,603.5 L761.6,603.8 L762.1,603.4 L762.6,603.9 L763.1,603.9 L763.6,603.7 L764.1,603.4 L764.6,604.0 L765.1,603.1 L765.6,603.6 L766.1,603.4 L766.6,601.6 L767.1,603.5 L767.6,603.8 L768.1,603.1 L768.6,603.7 L769.1,603.2 L769.6,603.3 L770.1,603.4 L770.6,603.2 L771.1,603.9 L771.6,604.5 L772.1,604.1 L772.6,603.5 L773.1,603.3 L773.6,603.6 L774.1,603.3 L774.6,603.9 L775.1,603.4 L775.6,603.9 L776.1,604.1 L776.6,603.6 L777.1,604.3 L777.6,604.3 L778.1,604.6 L778.6,604.2 L779.1,604.8 L779.6,604.1 L780.1,604.7 L780.6,605.0 L781.1,604.0 L781.6,604.1 L782.1,604.3 L782.6,603.7 L783.1,603.1 L783.6,603.5 L784.1,603.3 L784.6,603.2 L785.1,603.0 L785.6,603.6 L786.1,604.1 L786.6,602.7 L787.1,603.1 L787.6,603.8 L788.1,604.2 L788.6,604.3 L789.1,604.4 L789.6,604.2 L790.1,604.7 L790.6,604.4 L791.1,604.0 L791.6,603.4 L792.1,604.7 L792.6,604.6 L793.1,604.2 L793.6,604.3 L794.1,604.4 L794.6,605.0 L795.1,604.5 L795.6,604.2 L796.1,604.9 L796.6,604.8 L797.1,605.2 L797.6,604.8 L798.1,605.5 L798.6,605.4 L799.1,605.3 L799.6,604.7 L800.1,605.2 L800.6,605.2 L801.1,605.4 L801.6,605.4 L802.1,605.8 L802.6,605.5 L803.1,605.1 L803.6,605.3 L804.1,605.7 L804.6,605.5 L805.1,605.6 L805.6,605.1 L806.1,605.0 L806.6,605.1 L807.1,605.3 L807.6,605.6 L808.1,605.3 L808.6,605.0 L809.1,604.7 L809.6,605.3 L810.1,605.7 L810.6,605.1 L811.1,605.7 L811.6,605.0 L812.1,604.9 L812.6,604.9 L813.1,604.6 L813.6,604.1 L814.1,604.3 L814.6,604.5 L815.1,605.0 L815.6,604.6 L816.1,605.4 L816.6,605.3 L817.1,605.2 L817.6,605.0 L818.1,605.3 L818.6,605.6 L819.1,605.3 L819.6,604.2 L820.1,605.4 L820.6,605.6 L821.1,605.3 L821.6,605.6 L822.1,605.5 L822.6,604.8 L823.1,605.0 L823.6,604.7 L824.1,604.9 L824.6,604.6 L825.1,603.8 L825.6,604.3 L826.1,604.5 L826.6,604.5 L827.1,604.1 L827.6,604.5 L828.1,603.6 L828.6,603.8 L829.1,603.3 L829.6,603.7 L830.1,604.5 L830.6,603.8 L831.1,603.6 L831.6,604.2 L832.1,603.5 L832.6,604.5 L833.1,604.0 L833.6,603.8 L834.1,603.9 L834.6,603.5 L835.1,602.8 L835.6,603.7 L836.1,603.8 L836.6,603.8 L837.1,604.3 L837.6,604.4 L838.1,604.6 L838.6,604.0 L839.1,604.4 L839.6,604.1 L840.1,604.0 L840.6,605.1 L841.1,606.0 L841.6,606.5 L842.1,606.5 L842.1,607.6 L841.6,607.8 L841.1,608.4 L840.6,608.9 L840.1,609.6 L839.6,609.9 L839.1,609.9 L838.6,609.7 L838.1,609.7 L837.6,609.8 L837.1,609.3 L836.6,609.6 L836.1,610.1 L835.6,610.6 L835.1,610.6 L834.6,610.7 L834.1,609.8 L833.6,610.5 L833.1,609.6 L832.6,610.2 L832.1,609.8 L831.6,610.0 L831.1,609.8 L830.6,610.7 L830.1,610.0 L829.6,610.3 L829.1,610.8 L828.6,611.6 L828.1,610.0 L827.6,610.3 L827.1,609.7 L826.6,610.1 L826.1,609.8 L825.6,610.2 L825.1,610.0 L824.6,610.4 L824.1,609.4 L823.6,609.5 L823.1,608.9 L822.6,609.3 L822.1,609.0 L821.6,608.9 L821.1,608.7 L820.6,608.9 L820.1,609.1 L819.6,609.1 L819.1,609.7 L818.6,608.6 L818.1,609.1 L817.6,609.3 L817.1,609.0 L816.6,609.2 L816.1,609.3 L815.6,609.3 L815.1,609.1 L814.6,609.3 L814.1,609.6 L813.6,609.4 L813.1,609.2 L812.6,609.5 L812.1,609.0 L811.6,609.1 L811.1,608.7 L810.6,608.8 L810.1,608.5 L809.6,609.2 L809.1,609.5 L808.6,609.7 L808.1,609.0 L807.6,609.5 L807.1,608.7 L806.6,609.1 L806.1,609.0 L805.6,609.2 L805.1,608.9 L804.6,608.9 L804.1,608.9 L803.6,609.1 L803.1,609.1 L802.6,608.8 L802.1,608.5 L801.6,608.4 L801.1,608.6 L800.6,608.9 L800.1,608.9 L799.6,608.9 L799.1,608.8 L798.6,608.7 L798.1,609.0 L797.6,609.1 L797.1,608.8 L796.6,609.3 L796.1,610.6 L795.6,609.9 L795.1,609.5 L794.6,609.5 L794.1,609.8 L793.6,610.1 L793.1,609.5 L792.6,609.8 L792.1,609.4 L791.6,610.0 L791.1,609.9 L790.6,610.0 L790.1,610.7 L789.6,610.8 L789.1,609.5 L788.6,611.1 L788.1,610.4 L787.6,610.4 L787.1,609.7 L786.6,610.5 L786.1,611.1 L785.6,610.9 L785.1,611.1 L784.6,610.3 L784.1,610.8 L783.6,610.8 L783.1,611.1 L782.6,610.7 L782.1,610.4 L781.6,610.0 L781.1,609.6 L780.6,609.3 L780.1,610.2 L779.6,610.0 L779.1,610.0 L778.6,609.6 L778.1,609.9 L777.6,610.2 L777.1,610.1 L776.6,610.2 L776.1,610.4 L775.6,610.4 L775.1,611.2 L774.6,610.5 L774.1,610.5 L773.6,611.0 L773.1,611.6 L772.6,610.1 L772.1,610.2 L771.6,610.4 L771.1,610.5 L770.6,611.0 L770.1,610.8 L769.6,610.9 L769.1,610.4 L768.6,610.5 L768.1,610.4 L767.6,610.6 L767.1,610.8 L766.6,611.0 L766.1,610.5 L765.6,611.0 L765.1,610.6 L764.6,610.7 L764.1,610.5 L763.6,611.3 L763.1,611.0 L762.6,611.0 L762.1,610.3 L761.6,610.4 L761.1,610.8 L760.6,610.4 L760.1,610.7 L759.6,610.7 L759.1,610.3 L758.6,610.3 L758.1,610.2 L757.6,610.2 L757.1,610.4 L756.6,610.4 L756.1,610.7 L755.6,609.5 L755.1,609.2 L754.6,609.0 L754.1,609.4 L753.6,609.8 L753.1,609.7 L752.6,610.1 L752.1,610.2 L751.6,609.8 L751.1,610.3 L750.6,610.2 L750.1,610.5 L749.6,610.5 L749.1,610.9 L748.6,610.6 L748.1,611.7 L747.6,611.3 L747.1,610.6 L746.6,611.2 L746.1,611.9 L745.6,610.3 L745.1,611.7 L744.6,610.5 L744.1,610.4 L743.6,611.0 L743.1,610.9 L742.6,611.3 L742.1,610.5 L741.6,610.9 L741.1,610.4 L740.6,611.3 L740.1,610.8 L739.6,610.6 L739.1,610.4 L738.6,610.7 L738.1,611.3 L737.6,610.8 L737.1,610.4 L736.6,611.1 L736.1,610.7 L735.6,610.2 L735.1,610.3 L734.6,610.3 L734.1,609.6 L733.6,610.2 L733.1,609.8 L732.6,610.7 L732.1,611.5 L731.6,611.4Z" fill="#f1d3b6"/><path d="M731.6,641.3 L732.1,641.0 L732.6,642.3 L733.1,642.2 L733.6,641.8 L734.1,642.0 L734.6,641.9 L735.1,642.2 L735.6,642.2 L736.1,642.4 L736.6,642.7 L737.1,643.0 L737.6,642.3 L738.1,642.4 L738.6,643.1 L739.1,643.0 L739.6,642.7 L740.1,643.2 L740.6,643.2 L741.1,642.7 L741.6,643.3 L742.1,643.2 L742.6,643.2 L743.1,643.1 L743.6,643.4 L744.1,643.3 L744.6,643.3 L745.1,643.3 L745.6,643.1 L746.1,642.9 L746.6,643.2 L747.1,643.3 L747.6,643.2 L748.1,643.4 L748.6,642.6 L749.1,643.2 L749.6,643.3 L750.1,643.3 L750.6,643.3 L751.1,643.1 L751.6,643.3 L752.1,642.8 L752.6,643.2 L753.1,643.3 L753.6,643.3 L754.1,643.2 L754.6,642.8 L755.1,642.4 L755.6,642.3 L756.1,642.3 L756.6,642.7 L757.1,642.6 L757.6,642.3 L758.1,642.4 L758.6,642.1 L759.1,642.0 L759.6,642.4 L760.1,642.7 L760.6,642.5 L761.1,642.3 L761.6,642.1 L762.1,642.0 L762.6,642.1 L763.1,641.6 L763.6,641.8 L764.1,642.2 L764.6,641.6 L765.1,641.5 L765.6,642.1 L766.1,641.6 L766.6,641.8 L767.1,641.7 L767.6,641.8 L768.1,642.2 L768.6,642.1 L769.1,641.8 L769.6,641.5 L770.1,641.4 L770.6,641.4 L771.1,641.6 L771.6,641.9 L772.1,642.0 L772.6,640.8 L773.1,641.9 L773.6,641.0 L774.1,641.7 L774.6,641.3 L775.1,641.8 L775.6,640.7 L776.1,641.5 L776.6,641.4 L777.1,641.8 L777.6,641.5 L778.1,641.2 L778.6,641.2 L779.1,641.7 L779.6,641.7 L780.1,641.3 L780.6,640.3 L781.1,641.7 L781.6,641.9 L782.1,641.7 L782.6,641.8 L783.1,641.5 L783.6,642.2 L784.1,641.8 L784.6,642.7 L785.1,641.7 L785.6,642.8 L786.1,643.0 L786.6,643.1 L787.1,643.1 L787.6,643.2 L788.1,643.4 L788.6,643.2 L789.1,642.8 L789.6,642.6 L790.1,642.8 L790.6,642.4 L791.1,642.0 L791.6,641.9 L792.1,642.4 L792.6,642.5 L793.1,642.4 L793.6,642.5 L794.1,643.0 L794.6,642.8 L795.1,643.1 L795.6,642.7 L796.1,642.9 L796.6,642.4 L797.1,642.5 L797.6,642.7 L798.1,642.3 L798.6,643.0 L799.1,642.5 L799.6,643.1 L800.1,642.6 L800.6,642.7 L801.1,643.1 L801.6,643.2 L802.1,643.1 L802.6,643.1 L803.1,642.8 L803.6,642.6 L804.1,642.9 L804.6,641.8 L805.1,642.7 L805.6,642.0 L806.1,642.6 L806.6,642.4 L807.1,642.1 L807.6,642.4 L808.1,642.2 L808.6,642.0 L809.1,642.0 L809.6,642.2 L810.1,642.2 L810.6,641.8 L811.1,641.8 L811.6,641.6 L812.1,640.7 L812.6,642.2 L813.1,641.8 L813.6,641.8 L814.1,641.9 L814.6,641.4 L815.1,641.8 L815.6,642.3 L816.1,641.8 L816.6,642.4 L817.1,642.2 L817.6,642.1 L818.1,641.3 L818.6,641.9 L819.1,641.9 L819.6,642.0 L820.1,641.6 L820.6,641.8 L821.1,641.9 L821.6,641.5 L822.1,641.5 L822.6,639.9 L823.1,641.2 L823.6,641.7 L824.1,641.7 L824.6,641.6 L825.1,642.1 L825.6,642.1 L826.1,642.4 L826.6,642.1 L827.1,642.1 L827.6,642.4 L828.1,642.0 L828.6,641.7 L829.1,641.8 L829.6,642.1 L830.1,641.8 L830.6,641.7 L831.1,642.3 L831.6,642.2 L832.1,642.3 L832.6,641.8 L833.1,642.1 L833.6,642.8 L834.1,642.3 L834.6,642.6 L835.1,643.2 L835.6,642.9 L836.1,642.9 L836.6,642.4 L837.1,642.7 L837.6,642.1 L838.1,642.1 L838.6,642.6 L839.1,641.9 L839.6,641.9 L840.1,642.1 L840.6,643.0 L841.1,643.2 L841.6,643.3 L842.1,643.7 L842.1,645.4 L841.6,645.3 L841.1,645.8 L840.6,646.2 L840.1,646.8 L839.6,646.7 L839.1,646.7 L838.6,646.8 L838.1,646.9 L837.6,646.2 L837.1,647.2 L836.6,646.2 L836.1,646.0 L835.6,646.2 L835.1,646.0 L834.6,646.0 L834.1,646.2 L833.6,646.5 L833.1,647.6 L832.6,646.6 L832.1,646.7 L831.6,646.7 L831.1,646.5 L830.6,647.0 L830.1,647.2 L829.6,646.8 L829.1,647.4 L828.6,647.5 L828.1,647.0 L827.6,647.4 L827.1,646.9 L826.6,646.6 L826.1,646.6 L825.6,646.6 L825.1,647.1 L824.6,647.1 L824.1,647.8 L823.6,647.4 L823.1,647.3 L822.6,647.2 L822.1,647.1 L821.6,647.4 L821.1,647.4 L820.6,647.6 L820.1,646.8 L819.6,647.3 L819.1,646.6 L818.6,646.7 L818.1,646.8 L817.6,646.7 L817.1,647.5 L816.6,646.8 L816.1,646.9 L815.6,646.6 L815.1,648.4 L814.6,647.0 L814.1,647.8 L813.6,647.6 L813.1,647.1 L812.6,647.2 L812.1,647.1 L811.6,646.9 L811.1,646.8 L810.6,647.0 L810.1,647.0 L809.6,647.4 L809.1,646.9 L808.6,646.9 L808.1,647.1 L807.6,646.4 L807.1,646.7 L806.6,646.7 L806.1,646.9 L805.6,646.8 L805.1,646.3 L804.6,646.4 L804.1,645.9 L803.6,646.1 L803.1,646.1 L802.6,646.0 L802.1,645.6 L801.6,646.3 L801.1,645.6 L800.6,645.8 L800.1,646.1 L799.6,645.9 L799.1,645.7 L798.6,646.1 L798.1,646.1 L797.6,646.5 L797.1,646.3 L796.6,646.4 L796.1,646.3 L795.6,646.2 L795.1,646.7 L794.6,645.9 L794.1,646.0 L793.6,646.7 L793.1,646.3 L792.6,646.2 L792.1,646.8 L791.6,647.1 L791.1,646.5 L790.6,646.2 L790.1,645.9 L789.6,646.0 L789.1,646.0 L788.6,645.7 L788.1,645.8 L787.6,645.8 L787.1,645.9 L786.6,646.5 L786.1,646.3 L785.6,645.9 L785.1,646.3 L784.6,646.7 L784.1,647.1 L783.6,647.0 L783.1,647.5 L782.6,647.6 L782.1,647.3 L781.6,647.8 L781.1,647.4 L780.6,647.5 L780.1,647.0 L779.6,647.0 L779.1,647.9 L778.6,647.4 L778.1,648.5 L777.6,647.6 L777.1,647.4 L776.6,647.7 L776.1,647.8 L775.6,647.1 L775.1,648.3 L774.6,647.9 L774.1,647.6 L773.6,647.4 L773.1,646.9 L772.6,647.1 L772.1,646.8 L771.6,649.2 L771.1,647.1 L770.6,647.9 L770.1,647.7 L769.6,647.5 L769.1,647.3 L768.6,647.4 L768.1,646.8 L767.6,647.4 L767.1,647.1 L766.6,647.2 L766.1,648.4 L765.6,647.2 L765.1,648.8 L764.6,647.3 L764.1,646.7 L763.6,647.4 L763.1,646.8 L762.6,647.0 L762.1,646.5 L761.6,647.1 L761.1,646.8 L760.6,646.5 L760.1,646.3 L759.6,646.5 L759.1,646.6 L758.6,646.4 L758.1,646.2 L757.6,646.4 L757.1,646.8 L756.6,646.7 L756.1,647.0 L755.6,646.6 L755.1,646.1 L754.6,646.4 L754.1,645.9 L753.6,645.6 L753.1,645.6 L752.6,645.6 L752.1,645.9 L751.6,645.8 L751.1,645.7 L750.6,645.6 L750.1,645.6 L749.6,645.9 L749.1,645.6 L748.6,645.9 L748.1,645.9 L747.6,645.6 L747.1,645.9 L746.6,645.8 L746.1,645.8 L745.6,645.8 L745.1,645.6 L744.6,645.7 L744.1,645.7 L743.6,645.9 L743.1,646.2 L742.6,645.9 L742.1,645.8 L741.6,645.7 L741.1,646.0 L740.6,645.8 L740.1,645.7 L739.6,646.6 L739.1,645.6 L738.6,645.9 L738.1,646.0 L737.6,646.7 L737.1,646.2 L736.6,646.1 L736.1,647.1 L735.6,646.6 L735.1,646.8 L734.6,647.1 L734.1,647.4 L733.6,647.1 L733.1,647.6 L732.6,647.1 L732.1,648.0 L731.6,648.0Z" fill="#f1d3b6"/>
</svg>
<div class="t" style="left:78.6px;top:389.2px;font-size:13px;font-style:italic;color:rgba(225,235,195,0.8);transform:scaleX(0.9);transform-origin:left">Synth (Archi)(3)</div>
<div class="t" style="left:78.6px;top:526.2px;font-size:13px;font-style:italic;color:rgba(225,230,235,0.85);transform:scaleX(0.9);transform-origin:left">Sezione Fiati(3)</div>
<div class="t" style="left:78.6px;top:663.2px;font-size:13px;font-style:italic;color:rgba(240,215,195,0.7);transform:scaleX(0.9);transform-origin:left">Pianoforte(4)</div>
<div style="left:73.0px;top:264.7px;width:1.2px;height:410.9px;background:rgba(235,238,242,0.55)"></div>
<div style="left:269.2px;top:209px;width:1.2px;height:466.6px;background:rgba(235,238,242,0.55)"></div>
<div style="left:475.8px;top:209px;width:1.2px;height:466.6px;background:rgba(235,238,242,0.55)"></div>
<div style="left:658.6px;top:209px;width:1.2px;height:466.6px;background:rgba(235,238,242,0.55)"></div>
<div style="left:855.1px;top:163px;width:1.2px;height:110px;background:#6d717c"></div>
<div style="left:662.6px;top:121px;width:1.5px;height:554.6px;background:rgba(255,255,255,0.85)"></div>
<div style="left:50px;top:211px;width:869px;height:47.4px;background:#5a6075"></div>
<div style="left:50px;top:258.4px;width:869px;height:6.3px;background:#d9756b"></div>
<div style="left:919px;top:211px;width:55px;height:53.7px;background:#fff"></div>
<div class="t" style="left:123px;top:230px;font-size:15px;color:#fff;-webkit-text-stroke:0.3px #fff">Backing Tracks <span style="position:static;color:#c9ccd6;-webkit-text-stroke:0;font-size:14.8px;margin-left:1px">Timeline</span></div>
<svg style="left:826px;top:224px" width="26" height="28" viewBox="0 0 26 28">
<rect x="4" y="13" width="17" height="1.8" fill="#fff"/>
<rect x="11.7" y="2" width="1.6" height="8.5" fill="#fff"/>
<path d="M8.3,7 L12.5,11 L16.7,7" fill="none" stroke="#fff" stroke-width="1.6"/>
<rect x="11.7" y="17.5" width="1.6" height="8.5" fill="#fff"/>
<path d="M8.3,21 L12.5,17 L16.7,21" fill="none" stroke="#fff" stroke-width="1.6"/>
</svg>
<svg style="left:880px;top:226px" width="24" height="24" viewBox="0 0 24 24">
<path d="M4.3,20.3 L5.4,15.6 L16.8,4.2 Q18.2,2.9 19.5,4.2 L20.6,5.3 Q21.9,6.6 20.6,8 L9.1,19.3 Z" fill="#fff"/>
</svg>
<div style="left:937.7px;top:237.1px;width:16.6px;height:1.8px;background:#4d5363"></div>
<div style="left:945.1px;top:229.8px;width:1.8px;height:16.6px;background:#4d5363"></div>
<div style="left:51.5px;top:269.6px;width:921px;height:26.9px;background:#bdd86b"></div>
<div class="t" style="left:123.5px;top:274.9px;font-size:15.2px;color:#fff;-webkit-text-stroke:0.2px #fff">Synth</div>
<div class="t" style="left:854px;top:275.2px;font-size:15.5px;color:#fff;letter-spacing:-0.2px">Main Audio Out</div>
<div style="left:882.6px;top:297.1px;width:1.2px;height:107px;background:#3b4150"></div>
<svg style="left:896px;top:321.6px" width="30" height="60" viewBox="0 0 30 60"><rect x="3.2" y="6.7" width="3.6" height="8.3" fill="#c9cacd"/><path d="M7.5,6.7 L14.3,2.2 L14.3,19 L7.5,15 Z" fill="#c9cacd"/><path d="M17.9,6.5 L26,14.8 M26,6.5 L17.9,14.8" stroke="#c9cacd" stroke-width="2"/><path d="M4.9,53.5 L4.9,47 A6.85,6.85 0 0 1 25.1,47 L25.1,53.5" fill="none" stroke="#c9cacd" stroke-width="1.7" transform="translate(0,0)"/><rect x="7.3" y="47" width="2.9" height="10.4" fill="#c9cacd"/><rect x="20" y="47" width="2.9" height="10.4" fill="#c9cacd"/></svg>
<div style="left:934.6px;top:307.4px;width:27.3px;height:86.4px;background:#bdd86b"></div>
<div style="left:934.6px;top:307.4px;width:27.3px;height:25.4px;background:#4a4f5c"></div>
<div style="left:934.6px;top:332.8px;width:27.3px;height:3.2px;background:#fff"></div>
<div style="left:51.5px;top:406.6px;width:921px;height:26.9px;background:#659a42"></div>
<div class="t" style="left:123.5px;top:411.9px;font-size:15.2px;color:#fff;-webkit-text-stroke:0.2px #fff">Brass</div>
<div class="t" style="left:854px;top:412.2px;font-size:15.5px;color:#fff;letter-spacing:-0.2px">Main Audio Out</div>
<div style="left:882.6px;top:434.1px;width:1.2px;height:107px;background:#3b4150"></div>
<svg style="left:896px;top:458.6px" width="30" height="60" viewBox="0 0 30 60"><rect x="3.2" y="6.7" width="3.6" height="8.3" fill="#c9cacd"/><path d="M7.5,6.7 L14.3,2.2 L14.3,19 L7.5,15 Z" fill="#c9cacd"/><path d="M17.9,6.5 L26,14.8 M26,6.5 L17.9,14.8" stroke="#c9cacd" stroke-width="2"/><path d="M4.9,53.5 L4.9,47 A6.85,6.85 0 0 1 25.1,47 L25.1,53.5" fill="none" stroke="#c9cacd" stroke-width="1.7" transform="translate(0,0)"/><rect x="7.3" y="47" width="2.9" height="10.4" fill="#c9cacd"/><rect x="20" y="47" width="2.9" height="10.4" fill="#c9cacd"/></svg>
<div style="left:934.6px;top:444.4px;width:27.3px;height:86.4px;background:#659a42"></div>
<div style="left:934.6px;top:444.4px;width:27.3px;height:25.4px;background:#4a4f5c"></div>
<div style="left:934.6px;top:469.8px;width:27.3px;height:3.2px;background:#fff"></div>
<div style="left:51.5px;top:543.6px;width:921px;height:26.9px;background:#d98f4a"></div>
<div class="t" style="left:123.5px;top:548.9px;font-size:15.2px;color:#fff;-webkit-text-stroke:0.2px #fff">Piano</div>
<div class="t" style="left:854px;top:549.2px;font-size:15.5px;color:#fff;letter-spacing:-0.2px">Main Audio Out</div>
<div style="left:882.6px;top:571.1px;width:1.2px;height:107px;background:#3b4150"></div>
<svg style="left:896px;top:595.6px" width="30" height="60" viewBox="0 0 30 60"><rect x="3.2" y="6.7" width="3.6" height="8.3" fill="#c9cacd"/><path d="M7.5,6.7 L14.3,2.2 L14.3,19 L7.5,15 Z" fill="#c9cacd"/><path d="M17.9,6.5 L26,14.8 M26,6.5 L17.9,14.8" stroke="#c9cacd" stroke-width="2"/><path d="M4.9,53.5 L4.9,47 A6.85,6.85 0 0 1 25.1,47 L25.1,53.5" fill="none" stroke="#c9cacd" stroke-width="1.7" transform="translate(0,0)"/><rect x="7.3" y="47" width="2.9" height="10.4" fill="#c9cacd"/><rect x="20" y="47" width="2.9" height="10.4" fill="#c9cacd"/></svg>
<div style="left:934.6px;top:581.4px;width:27.3px;height:86.4px;background:#d98f4a"></div>
<div style="left:934.6px;top:581.4px;width:27.3px;height:25.4px;background:#4a4f5c"></div>
<div style="left:934.6px;top:606.8px;width:27.3px;height:3.2px;background:#fff"></div>
<div style="left:60.2px;top:301.0px;width:27.2px;height:27.2px;border-radius:50%;background:#fff"></div><div style="left:67.9px;top:308.7px;width:11.8px;height:11.8px;border-radius:50%;background:#222837"></div>
<div style="left:60.2px;top:363.6px;width:27.2px;height:27.2px;border-radius:50%;background:#fff"></div><svg style="left:62.8px;top:372.2px" width="22" height="10" viewBox="0 0 22 10"><path d="M1,5 L5,1.3 L5,3.7 L9.3,3.7 L9.3,6.3 L5,6.3 L5,8.7 Z" fill="#222837" stroke="#222837" stroke-width="0.8" stroke-linejoin="round"/><path d="M21,5 L17,1.3 L17,3.7 L12.7,3.7 L12.7,6.3 L17,6.3 L17,8.7 Z" fill="#222837" stroke="#222837" stroke-width="0.8" stroke-linejoin="round"/></svg>
<div style="left:842.6px;top:301.0px;width:27.2px;height:27.2px;border-radius:50%;background:linear-gradient(90deg,#fff 50%,#a9abb2 50%)"></div><div style="left:850.3px;top:308.7px;width:11.8px;height:11.8px;border-radius:50%;background:#222837"></div>
<div style="left:842.6px;top:363.6px;width:27.2px;height:27.2px;border-radius:50%;background:linear-gradient(90deg,#fff 50%,#a9abb2 50%)"></div><svg style="left:845.2px;top:372.2px" width="22" height="10" viewBox="0 0 22 10"><path d="M1,5 L5,1.3 L5,3.7 L9.3,3.7 L9.3,6.3 L5,6.3 L5,8.7 Z" fill="#222837" stroke="#222837" stroke-width="0.8" stroke-linejoin="round"/><path d="M21,5 L17,1.3 L17,3.7 L12.7,3.7 L12.7,6.3 L17,6.3 L17,8.7 Z" fill="#222837" stroke="#222837" stroke-width="0.8" stroke-linejoin="round"/></svg>
<div style="left:227.4px;top:438.0px;width:27.2px;height:27.2px;border-radius:50%;background:#fff"></div><div style="left:235.1px;top:445.7px;width:11.8px;height:11.8px;border-radius:50%;background:#222837"></div>
<div style="left:227.4px;top:500.6px;width:27.2px;height:27.2px;border-radius:50%;background:#fff"></div><svg style="left:230.0px;top:509.2px" width="22" height="10" viewBox="0 0 22 10"><path d="M1,5 L5,1.3 L5,3.7 L9.3,3.7 L9.3,6.3 L5,6.3 L5,8.7 Z" fill="#222837" stroke="#222837" stroke-width="0.8" stroke-linejoin="round"/><path d="M21,5 L17,1.3 L17,3.7 L12.7,3.7 L12.7,6.3 L17,6.3 L17,8.7 Z" fill="#222837" stroke="#222837" stroke-width="0.8" stroke-linejoin="round"/></svg>
<div style="left:842.6px;top:438.0px;width:27.2px;height:27.2px;border-radius:50%;background:linear-gradient(90deg,#fff 50%,#a9abb2 50%)"></div><div style="left:850.3px;top:445.7px;width:11.8px;height:11.8px;border-radius:50%;background:#222837"></div>
<div style="left:842.6px;top:500.6px;width:27.2px;height:27.2px;border-radius:50%;background:linear-gradient(90deg,#fff 50%,#a9abb2 50%)"></div><svg style="left:845.2px;top:509.2px" width="22" height="10" viewBox="0 0 22 10"><path d="M1,5 L5,1.3 L5,3.7 L9.3,3.7 L9.3,6.3 L5,6.3 L5,8.7 Z" fill="#222837" stroke="#222837" stroke-width="0.8" stroke-linejoin="round"/><path d="M21,5 L17,1.3 L17,3.7 L12.7,3.7 L12.7,6.3 L17,6.3 L17,8.7 Z" fill="#222837" stroke="#222837" stroke-width="0.8" stroke-linejoin="round"/></svg>
<div style="left:163.9px;top:575.0px;width:27.2px;height:27.2px;border-radius:50%;background:#fff"></div><div style="left:171.6px;top:582.7px;width:11.8px;height:11.8px;border-radius:50%;background:#222837"></div>
<div style="left:60.2px;top:637.6px;width:27.2px;height:27.2px;border-radius:50%;background:#fff"></div><svg style="left:62.8px;top:646.2px" width="22" height="10" viewBox="0 0 22 10"><path d="M1,5 L5,1.3 L5,3.7 L9.3,3.7 L9.3,6.3 L5,6.3 L5,8.7 Z" fill="#222837" stroke="#222837" stroke-width="0.8" stroke-linejoin="round"/><path d="M21,5 L17,1.3 L17,3.7 L12.7,3.7 L12.7,6.3 L17,6.3 L17,8.7 Z" fill="#222837" stroke="#222837" stroke-width="0.8" stroke-linejoin="round"/></svg>
<div style="left:842.6px;top:575.0px;width:27.2px;height:27.2px;border-radius:50%;background:linear-gradient(90deg,#fff 50%,#a9abb2 50%)"></div><div style="left:850.3px;top:582.7px;width:11.8px;height:11.8px;border-radius:50%;background:#222837"></div>
<div style="left:842.6px;top:637.6px;width:27.2px;height:27.2px;border-radius:50%;background:linear-gradient(90deg,#fff 50%,#a9abb2 50%)"></div><svg style="left:845.2px;top:646.2px" width="22" height="10" viewBox="0 0 22 10"><path d="M1,5 L5,1.3 L5,3.7 L9.3,3.7 L9.3,6.3 L5,6.3 L5,8.7 Z" fill="#222837" stroke="#222837" stroke-width="0.8" stroke-linejoin="round"/><path d="M21,5 L17,1.3 L17,3.7 L12.7,3.7 L12.7,6.3 L17,6.3 L17,8.7 Z" fill="#222837" stroke="#222837" stroke-width="0.8" stroke-linejoin="round"/></svg>
<svg style="left:655px;top:120px" width="17" height="15" viewBox="0 0 17 15"><path d="M1.9,1 L15.4,1 L8.5,13.5 Z" fill="#fff"/></svg>
<svg style="left:900px;top:151px" width="56" height="56" viewBox="0 0 56 56">
<g transform="translate(27.6,28.4)">
<path d="M0 0 L-19.13 -5.12 A19.8 19.8 0 1 1 11.97 15.77 Z" fill="#222837"/>
<path d="M0 0 L-11.92 15.81 A19.8 19.8 0 0 1 -19.13 -5.12 Z" fill="#d0d1d4"/>
<circle cx="0.4" cy="0.6" r="12.9" fill="#fff"/>
<circle cx="-1.6" cy="-2.2" r="3.7" fill="none" stroke="#5d616c" stroke-width="1"/>
<path d="M -1.6 -4 L -1.6 -0.4 M -3.4 -2.2 L 0.2 -2.2" stroke="#5d616c" stroke-width="0.9"/>
<path d="M 0.6 0.9 L 5.2 7.2" stroke="#5d616c" stroke-width="1"/>
</g></svg>
<div style="left:50px;top:675.6px;width:924px;height:4px;background:#5c5d62"></div>
<div style="left:50px;top:675.6px;width:230px;height:4px;background:#8c909c"></div>
<div style="left:510.5px;top:676px;width:1.2px;height:3.5px;background:#3a4050"></div>
<div style="left:741.8px;top:676px;width:1.2px;height:3.5px;background:#3a4050"></div>
<div style="left:972px;top:675.6px;width:2px;height:4px;background:#222837"></div>
<div style="left:50px;top:679.5px;width:924px;height:66.5px;background:#1c2029;border-radius:0 0 5px 5px;overflow:hidden">
<div style="left:0.00px;top:0;width:71.08px;height:66.5px;background:linear-gradient(135deg,#3a4150,#2c3240)"></div>
<div class="t" style="left:-10.0px;width:91.1px;top:52.6px;text-align:center;font-size:9px;font-weight:bold;color:#fff;transform:scaleX(0.81)">SONGS</div>
<div style="left:72.48px;top:0;width:69.58px;height:66.5px;background:#5a6075"></div>
<div class="t" style="left:62.5px;width:89.6px;top:52.6px;text-align:center;font-size:9px;font-weight:bold;color:#fff;transform:scaleX(0.81)">SCENES</div>
<div style="left:143.46px;top:0;width:69.58px;height:66.5px;background:#ffffff"></div>
<div class="t" style="left:133.5px;width:89.6px;top:52.6px;text-align:center;font-size:9px;font-weight:normal;color:#3a3f4c;transform:scaleX(0.9)">TIMELINE</div>
<div style="left:214.44px;top:0;width:69.58px;height:66.5px;background:#7686a2"></div>
<div class="t" style="left:204.4px;width:89.6px;top:52.6px;text-align:center;font-size:9px;font-weight:bold;color:#fff;transform:scaleX(0.81)">LAYERS</div>
<div style="left:285.42px;top:0;width:69.58px;height:66.5px;background:#7686a2"></div>
<div class="t" style="left:275.4px;width:89.6px;top:52.6px;text-align:center;font-size:9px;font-weight:bold;color:#fff;transform:scaleX(0.81)">KEY RANGES</div>
<div style="left:356.40px;top:0;width:69.58px;height:66.5px;background:#7686a2"></div>
<div class="t" style="left:346.4px;width:89.6px;top:52.6px;text-align:center;font-size:9px;font-weight:bold;color:#fff;transform:scaleX(0.81)">ATTACHMENT</div>
<div style="left:427.38px;top:0;width:69.58px;height:66.5px;background:#323846"></div>
<div style="left:498.36px;top:0;width:69.58px;height:66.5px;background:#323846"></div>
<div class="t" style="left:488.4px;width:89.6px;top:52.6px;text-align:center;font-size:9px;font-weight:bold;color:#fff;transform:scaleX(0.81)">TRANSPORT</div>
<div style="left:569.34px;top:0;width:69.58px;height:66.5px;background:#323846"></div>
<div class="t" style="left:559.3px;width:89.6px;top:52.6px;text-align:center;font-size:9px;font-weight:bold;color:#fff;transform:scaleX(0.81)">TRANSPOSE</div>
<div style="left:640.32px;top:0;width:69.58px;height:66.5px;background:#323846"></div>
<div class="t" style="left:630.3px;width:89.6px;top:52.6px;text-align:center;font-size:9px;font-weight:bold;color:#fff;transform:scaleX(0.81)">TEMPO &amp; SYNC</div>
<div style="left:711.30px;top:0;width:69.58px;height:66.5px;background:#323846"></div>
<div class="t" style="left:701.3px;width:89.6px;top:52.6px;text-align:center;font-size:9px;font-weight:bold;color:#fff;transform:scaleX(0.81)">MIXER</div>
<div style="left:782.28px;top:0;width:69.58px;height:66.5px;background:#575c68"></div>
<div class="t" style="left:772.3px;width:89.6px;top:52.6px;text-align:center;font-size:9px;font-weight:bold;color:#fff;transform:scaleX(0.81)">SETTINGS</div>
<div style="left:853.26px;top:0;width:70.74px;height:66.5px;background:#c6483c"></div>
<div class="t" style="left:843.3px;width:90.7px;top:52.6px;text-align:center;font-size:9px;font-weight:bold;color:#fff;transform:scaleX(0.81)">PANIC</div>
</div>
<svg style="left:50px;top:679.5px" width="924" height="67" viewBox="0 679.5 924 67">
<g transform="translate(-50,0)">
<!-- songs -->
<circle cx="78.4" cy="714.3" r="3.9" fill="#fff"/><circle cx="92.7" cy="712.5" r="3.9" fill="#fff"/>
<rect x="81" y="698.5" width="1.8" height="15.5" fill="#fff"/><rect x="95.2" y="696" width="1.9" height="16.5" fill="#fff"/>
<path d="M81,698.3 L97.1,695.8 L97.1,698.6 L81,701.1 Z" fill="#fff"/>
<path d="M82.5,702.2 L95.5,700.2 L95.5,702 L82.5,704 Z" fill="#fff"/>
<!-- scenes -->
<rect x="148" y="705.9" width="20.3" height="12.5" fill="none" stroke="#fff" stroke-width="1.7"/>
<rect x="151" y="709.3" width="11.7" height="1.6" fill="#fff"/><rect x="153.6" y="713.2" width="11.3" height="1.6" fill="#fff"/>
<path d="M145.30,702.60 L167.60,696.60 L168.54,700.08 L146.24,706.08 Z" fill="#fff"/>
<path d="M149.62,702.47 L151.55,701.95 L151.96,703.50 L150.03,704.02 Z M154.06,701.28 L155.99,700.76 L156.40,702.30 L154.47,702.82 Z M158.50,700.08 L160.43,699.56 L160.85,701.11 L158.92,701.63 Z M162.94,698.89 L164.87,698.37 L165.29,699.91 L163.36,700.43 Z " fill="#5a6075"/>
<!-- timeline -->
<circle cx="229.9" cy="711.8" r="9.8" fill="none" stroke="#222838" stroke-width="1.5"/>
<circle cx="230" cy="711.8" r="2.3" fill="none" stroke="#222838" stroke-width="1.3"/>
<ellipse cx="220.8" cy="712.4" rx="3.9" ry="2.9" transform="rotate(-25 220.8 712.4)" fill="#222838"/>
<rect x="224" y="695.5" width="1.5" height="17" fill="#222838"/>
<path d="M224,695.5 L232.7,693 L232.7,697.2 L224,699.6 Z" fill="#222838"/>
<!-- layers -->
<g stroke="#fff" stroke-width="1.6"><path d="M287.2,699 L311.3,699 M287.2,707.3 L311.3,707.3 M287.2,715.6 L311.3,715.6"/></g>
<g fill="#7686a2" stroke="#fff" stroke-width="1.5"><circle cx="301.1" cy="699" r="2.6"/><circle cx="295.2" cy="707.3" r="2.6"/><circle cx="306.5" cy="715.6" r="2.6"/></g>
<!-- key ranges -->
<rect x="353.8" y="697.4" width="21" height="19.4" fill="none" stroke="#fff" stroke-width="1.6"/>
<path d="M359,697 L359,717 M364.1,697 L364.1,717 M369.2,697 L369.2,717" stroke="#fff" stroke-width="1"/>
<rect x="357.8" y="697" width="2.4" height="13.6" fill="#fff"/><rect x="362.9" y="697" width="2.4" height="13.6" fill="#fff"/><rect x="368" y="697" width="2.4" height="13.6" fill="#fff"/>
<path d="M377,697.2 L388,697.2 L388,717.2 L377,717.2" fill="none" stroke="#fff" stroke-width="1.5" stroke-dasharray="1.2 1.6"/>
<!-- attachment -->
<path d="M433.9,696.8 L445.3,696.8 L449.5,701 L449.5,717.8 L433.9,717.8 Z" fill="none" stroke="#fff" stroke-width="1.6" stroke-linejoin="round"/>
<path d="M445.3,696.8 L445.3,701 L449.5,701" fill="none" stroke="#fff" stroke-width="1.2"/>
<!-- transpose -->
<rect x="642.1" y="694" width="1.5" height="27.3" fill="#fff"/>
<path d="M643.2,713.2 C645.5,709 649.5,707 652.3,707.6 C655.2,708.3 654.6,712 652.2,714.8 C649.8,717.6 646,720 643.2,721.6 L643.2,719.6 C646,717.8 649.3,715.2 650.9,712.6 C652.2,710.4 651.4,709.1 649.8,709.2 C647.8,709.3 645.3,711.3 643.6,714.4 Z" fill="#fff"/>
<path d="M655.6,699.3 L664.3,697.6 M655.3,704.3 L664,702.6" stroke="#fff" stroke-width="1.9"/>
<path d="M658.6,695.3 L657.8,707 M662.4,694.8 L661.6,706.5" stroke="#fff" stroke-width="1.2"/>
<!-- mixer -->
<rect x="784.1" y="702" width="4.6" height="10.5" fill="#fff"/>
<path d="M789.5,702 L796.7,697.2 L796.7,717.4 L789.5,712.5 Z" fill="#fff"/>
<path d="M799.6,701.2 Q803.8,707.3 799.6,713.4" fill="none" stroke="#fff" stroke-width="1.6"/>
<path d="M803.2,697.8 Q811,707.3 803.2,716.8" fill="none" stroke="#fff" stroke-width="1.6"/>
<!-- settings gear -->
<g transform="translate(866.8,707)" fill="none" stroke="#fff" stroke-width="1.5">
<path d="M10.45,-1.79 L10.45,1.79 L7.74,2.39 L7.16,3.78 L8.66,6.12 L6.12,8.66 L3.78,7.16 L2.39,7.74 L1.79,10.45 L-1.79,10.45 L-2.39,7.74 L-3.78,7.16 L-6.12,8.66 L-8.66,6.12 L-7.16,3.78 L-7.74,2.39 L-10.45,1.79 L-10.45,-1.79 L-7.74,-2.39 L-7.16,-3.78 L-8.66,-6.12 L-6.12,-8.66 L-3.78,-7.16 L-2.39,-7.74 L-1.79,-10.45 L1.79,-10.45 L2.39,-7.74 L3.78,-7.16 L6.12,-8.66 L8.66,-6.12 L7.16,-3.78 L7.74,-2.39Z" stroke-linejoin="round"/>
<circle r="4.7"/>
</g>
<circle cx="882.8" cy="695.7" r="7.8" fill="#dc705f"/>
<rect x="881.9" y="690.3" width="1.9" height="6.7" rx="0.9" fill="#fff"/><circle cx="882.85" cy="699.6" r="1.05" fill="#fff"/>
<!-- panic -->
<path d="M938,696.8 L949.2,718.8 L926.8,718.8 Z" fill="#fff" stroke="#fff" stroke-width="1" stroke-linejoin="round"/>
<rect x="936.85" y="703.8" width="2.4" height="9" fill="#c6483c"/><rect x="936.85" y="714.3" width="2.4" height="2.2" fill="#c6483c"/>
</g></svg>
<div class="t" style="left:553.5px;top:697px;font-size:23px;color:#fff;letter-spacing:0px">02:48</div>
<div class="t" style="left:713.5px;top:694px;font-size:19.5px;color:#fff;letter-spacing:0.3px">82</div>
<div class="t" style="left:715px;top:715.3px;font-size:8.8px;font-weight:bold;color:#fff;transform:scaleX(0.88);transform-origin:left">BPM</div>
</body></html>
